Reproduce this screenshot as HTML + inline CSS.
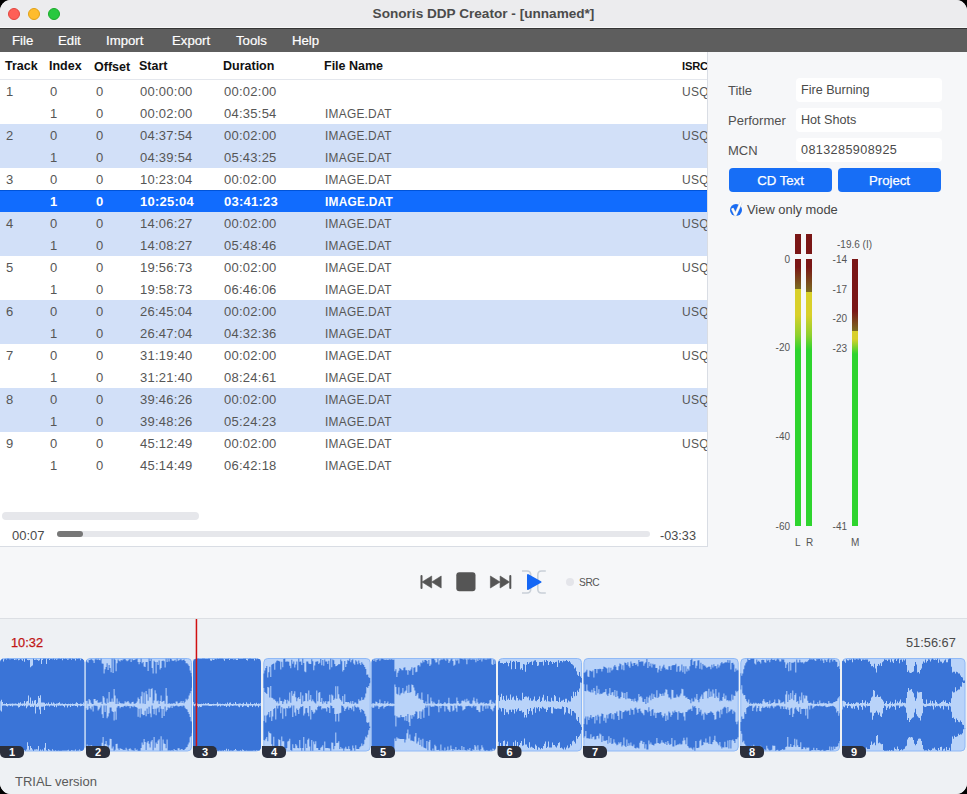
<!DOCTYPE html>
<html><head><meta charset="utf-8">
<style>
*{margin:0;padding:0;box-sizing:border-box}
html,body{width:967px;height:794px;overflow:hidden;background:#000}
body{font-family:"Liberation Sans",sans-serif;position:relative}
.a{position:absolute}
#win{position:absolute;left:0;top:0;width:967px;height:794px;background:#f6f7f9;border-radius:11px;overflow:hidden}
#titlebar{left:0;top:0;width:967px;height:28px;background:#ececee;border-bottom:1px solid #f8f8f8}
.tl{width:12px;height:12px;border-radius:50%;top:8px}
#title{left:0;width:967px;top:6px;text-align:center;font-weight:bold;font-size:13.6px;color:#4b4b4b}
#menubar{left:0;top:28px;width:967px;height:24px;background:#5e5e5e;border-top:1px solid #353535}
.mi{top:4px;font-size:13.2px;color:#fff;-webkit-text-stroke:0.2px #fff}
#table{left:0;top:52px;width:708px;height:495px;background:#fff;border-right:1px solid #d9dde4;border-bottom:1px solid #d9dde4;overflow:hidden}
.hd{font-weight:bold;font-size:12.5px;color:#111;top:7px}
.row{position:absolute;left:0;width:707px;height:22px;font-size:13px;color:#565656}
.row span{position:absolute;top:4px;letter-spacing:0.25px}
.b{background:#d2e0f8}
.sel{background:#116cfe;box-shadow:inset 0 1px 0 #0053d8;color:#fff;font-weight:bold}
.lbl{font-size:13px;color:#505050}
.inp{left:796px;width:146px;height:24px;background:#fff;border-radius:4px;font-size:12.6px;color:#4a4a4a;padding:5px 0 0 5px}
.btn{top:168px;height:24px;background:#176ef6;border-radius:4px;color:#fff;font-size:13.2px;text-align:center;padding-top:5px;-webkit-text-stroke:0.25px #fff}
.ml{font-size:10px;color:#555}
</style></head><body>
<div id="win">
 <div id="titlebar" class="a"></div>
 <div class="a tl" style="left:8px;background:#fe5f57;border:0.5px solid #e2463f"></div>
 <div class="a tl" style="left:28px;background:#febc2e;border:0.5px solid #e1a116"></div>
 <div class="a tl" style="left:48px;background:#28c840;border:0.5px solid #1aab29"></div>
 <div id="title" class="a">Sonoris DDP Creator - [unnamed*]</div>
 <div id="menubar" class="a">
  <span class="a mi" style="left:12px">File</span>
  <span class="a mi" style="left:58px">Edit</span>
  <span class="a mi" style="left:106px">Import</span>
  <span class="a mi" style="left:172px">Export</span>
  <span class="a mi" style="left:236px">Tools</span>
  <span class="a mi" style="left:292px">Help</span>
 </div>
 <div id="table" class="a">
  <span class="a hd" style="left:5px">Track</span>
  <span class="a hd" style="left:49px">Index</span>
  <span class="a hd" style="left:94px;top:8px">Offset</span>
  <span class="a hd" style="left:139px">Start</span>
  <span class="a hd" style="left:223px">Duration</span>
  <span class="a hd" style="left:324px">File Name</span>
  <span class="a hd" style="left:682px;font-size:11.2px;letter-spacing:-0.2px;top:8px">ISRC</span>
  <div class="a" style="left:0;top:27px;width:707px;height:1px;background:#e4e7ed"></div>
  <div class="row" style="top:28px"><span style="left:6px">1</span><span style="left:50px">0</span><span style="left:96px">0</span><span style="left:140px">00:00:00</span><span style="left:224px">00:02:00</span><span style="left:682px;font-size:12px;top:5px">USQ</span></div>
  <div class="row" style="top:50px"><span style="left:50px">1</span><span style="left:96px">0</span><span style="left:140px">00:02:00</span><span style="left:224px">04:35:54</span><span style="left:325px;font-size:11.9px;top:5px">IMAGE.DAT</span></div>
  <div class="row b" style="top:72px"><span style="left:6px">2</span><span style="left:50px">0</span><span style="left:96px">0</span><span style="left:140px">04:37:54</span><span style="left:224px">00:02:00</span><span style="left:325px;font-size:11.9px;top:5px">IMAGE.DAT</span><span style="left:682px;font-size:12px;top:5px">USQ</span></div>
  <div class="row b" style="top:94px"><span style="left:50px">1</span><span style="left:96px">0</span><span style="left:140px">04:39:54</span><span style="left:224px">05:43:25</span><span style="left:325px;font-size:11.9px;top:5px">IMAGE.DAT</span></div>
  <div class="row" style="top:116px"><span style="left:6px">3</span><span style="left:50px">0</span><span style="left:96px">0</span><span style="left:140px">10:23:04</span><span style="left:224px">00:02:00</span><span style="left:325px;font-size:11.9px;top:5px">IMAGE.DAT</span><span style="left:682px;font-size:12px;top:5px">USQ</span></div>
  <div class="row sel" style="top:138px"><span style="left:50px">1</span><span style="left:96px">0</span><span style="left:140px">10:25:04</span><span style="left:224px">03:41:23</span><span style="left:325px;font-size:11.9px;top:5px">IMAGE.DAT</span></div>
  <div class="row b" style="top:160px"><span style="left:6px">4</span><span style="left:50px">0</span><span style="left:96px">0</span><span style="left:140px">14:06:27</span><span style="left:224px">00:02:00</span><span style="left:325px;font-size:11.9px;top:5px">IMAGE.DAT</span><span style="left:682px;font-size:12px;top:5px">USQ</span></div>
  <div class="row b" style="top:182px"><span style="left:50px">1</span><span style="left:96px">0</span><span style="left:140px">14:08:27</span><span style="left:224px">05:48:46</span><span style="left:325px;font-size:11.9px;top:5px">IMAGE.DAT</span></div>
  <div class="row" style="top:204px"><span style="left:6px">5</span><span style="left:50px">0</span><span style="left:96px">0</span><span style="left:140px">19:56:73</span><span style="left:224px">00:02:00</span><span style="left:325px;font-size:11.9px;top:5px">IMAGE.DAT</span><span style="left:682px;font-size:12px;top:5px">USQ</span></div>
  <div class="row" style="top:226px"><span style="left:50px">1</span><span style="left:96px">0</span><span style="left:140px">19:58:73</span><span style="left:224px">06:46:06</span><span style="left:325px;font-size:11.9px;top:5px">IMAGE.DAT</span></div>
  <div class="row b" style="top:248px"><span style="left:6px">6</span><span style="left:50px">0</span><span style="left:96px">0</span><span style="left:140px">26:45:04</span><span style="left:224px">00:02:00</span><span style="left:325px;font-size:11.9px;top:5px">IMAGE.DAT</span><span style="left:682px;font-size:12px;top:5px">USQ</span></div>
  <div class="row b" style="top:270px"><span style="left:50px">1</span><span style="left:96px">0</span><span style="left:140px">26:47:04</span><span style="left:224px">04:32:36</span><span style="left:325px;font-size:11.9px;top:5px">IMAGE.DAT</span></div>
  <div class="row" style="top:292px"><span style="left:6px">7</span><span style="left:50px">0</span><span style="left:96px">0</span><span style="left:140px">31:19:40</span><span style="left:224px">00:02:00</span><span style="left:325px;font-size:11.9px;top:5px">IMAGE.DAT</span><span style="left:682px;font-size:12px;top:5px">USQ</span></div>
  <div class="row" style="top:314px"><span style="left:50px">1</span><span style="left:96px">0</span><span style="left:140px">31:21:40</span><span style="left:224px">08:24:61</span><span style="left:325px;font-size:11.9px;top:5px">IMAGE.DAT</span></div>
  <div class="row b" style="top:336px"><span style="left:6px">8</span><span style="left:50px">0</span><span style="left:96px">0</span><span style="left:140px">39:46:26</span><span style="left:224px">00:02:00</span><span style="left:325px;font-size:11.9px;top:5px">IMAGE.DAT</span><span style="left:682px;font-size:12px;top:5px">USQ</span></div>
  <div class="row b" style="top:358px"><span style="left:50px">1</span><span style="left:96px">0</span><span style="left:140px">39:48:26</span><span style="left:224px">05:24:23</span><span style="left:325px;font-size:11.9px;top:5px">IMAGE.DAT</span></div>
  <div class="row" style="top:380px"><span style="left:6px">9</span><span style="left:50px">0</span><span style="left:96px">0</span><span style="left:140px">45:12:49</span><span style="left:224px">00:02:00</span><span style="left:325px;font-size:11.9px;top:5px">IMAGE.DAT</span><span style="left:682px;font-size:12px;top:5px">USQ</span></div>
  <div class="row" style="top:402px"><span style="left:50px">1</span><span style="left:96px">0</span><span style="left:140px">45:14:49</span><span style="left:224px">06:42:18</span><span style="left:325px;font-size:11.9px;top:5px">IMAGE.DAT</span></div>
 </div>

 <!-- right panel -->
 <span class="a lbl" style="left:728px;top:83px">Title</span>
 <span class="a lbl" style="left:728px;top:113px">Performer</span>
 <span class="a lbl" style="left:728px;top:143px">MCN</span>
 <div class="a inp" style="top:78px">Fire Burning</div>
 <div class="a inp" style="top:108px">Hot Shots</div>
 <div class="a inp" style="top:138px;letter-spacing:0.4px">0813285908925</div>
 <div class="a btn" style="left:729px;width:103px">CD Text</div>
 <div class="a btn" style="left:838px;width:103px">Project</div>
 <div class="a" style="left:730px;top:204px;width:12px;height:12px;border-radius:50%;background:#1a6cf3"></div>
 <svg class="a" style="left:724px;top:196px" width="24" height="24" viewBox="724 196 24 24"><path d="M732.3 208.3 L735.4 214.8 L741.2 202.2" stroke="#d6d6d6" stroke-width="2.8" fill="none" stroke-linejoin="round"/><path d="M732.3 208.3 L735.4 214.8 L741.2 202.2" stroke="#fff" stroke-width="1.7" fill="none" stroke-linejoin="round"/></svg>
 <span class="a" style="left:747px;top:202px;font-size:12.9px;color:#454545">View only mode</span>
 <!-- meters -->
 <div class="a" style="left:795px;top:234px;width:6px;height:20px;background:#7a1616"></div>
 <div class="a" style="left:806px;top:234px;width:6px;height:20px;background:#7a1616"></div>
 <div class="a" style="left:795px;top:259px;width:6px;height:267px;background:linear-gradient(to bottom,#7a1616 0px,#7a1616 8px,#7b6c20 30px,#d9d02a 30.5px,#d9d02a 56px,#8fd02e 76px,#2ed42e 91px,#2ed42e 267px)"></div>
 <div class="a" style="left:806px;top:259px;width:6px;height:267px;background:linear-gradient(to bottom,#7a1616 0px,#7a1616 8px,#7b6c20 33px,#d9d02a 33.5px,#d9d02a 56px,#8fd02e 76px,#2ed42e 91px,#2ed42e 267px)"></div>
 <div class="a" style="left:852px;top:259px;width:6px;height:267px;background:linear-gradient(to bottom,#7a1616 0px,#7a1616 52px,#7b6c20 72px,#d9d02a 72.5px,#d9d02a 80px,#2ed42e 95px,#2ed42e 267px)"></div>
 <span class="a ml" style="right:177px;top:254px">0</span>
 <span class="a ml" style="right:177px;top:342px">-20</span>
 <span class="a ml" style="right:177px;top:431px">-40</span>
 <span class="a ml" style="right:177px;top:521px">-60</span>
 <span class="a ml" style="right:120px;top:254px">-14</span>
 <span class="a ml" style="right:120px;top:284px">-17</span>
 <span class="a ml" style="right:120px;top:313px">-20</span>
 <span class="a ml" style="right:120px;top:343px">-23</span>
 <span class="a ml" style="right:120px;top:521px">-41</span>
 <span class="a ml" style="left:837px;top:239px">-19.6 (I)</span>
 <span class="a ml" style="left:795px;top:537px">L</span>
 <span class="a ml" style="left:806px;top:537px">R</span>
 <span class="a ml" style="left:851px;top:537px">M</span>
 <!-- progress -->
 <div class="a" style="left:2px;top:512px;width:197px;height:8px;border-radius:4px;background:#e6e7eb"></div>
 <span class="a" style="left:12px;top:528px;font-size:13px;color:#4a4a4a">00:07</span>
 <div class="a" style="left:57px;top:531px;width:593px;height:6px;border-radius:3px;background:#e6e7eb"></div>
 <div class="a" style="left:57px;top:531px;width:26px;height:6px;border-radius:3px;background:#777"></div>
 <span class="a" style="left:660px;top:529px;font-size:12.7px;color:#4a4a4a">-03:33</span>
 <!-- transport -->
 <svg class="a" style="left:0;top:560px" width="967" height="40" viewBox="0 560 967 40">
  <rect x="420.5" y="575" width="2" height="14" rx="1" fill="#555"/>
  <path d="M422 582 L431.7 576 L431.7 588 Z M431.7 582 L441.2 576 L441.2 588 Z" fill="#555" stroke="#555" stroke-width="0.6" stroke-linejoin="round"/>
  <rect x="456.3" y="572.3" width="19.2" height="19" rx="3" fill="#555"/>
  <path d="M490.4 576 L500.1 582 L490.4 588 Z M500.1 576 L509.5 582 L500.1 588 Z" fill="#555" stroke="#555" stroke-width="0.6" stroke-linejoin="round"/>
  <rect x="509.3" y="575" width="2" height="14" rx="1" fill="#555"/>
  <path d="M522 571 L527 571 Q530.7 571 530.7 575 L530.7 589 Q530.7 593 527 593 L522 593" fill="none" stroke="#c9d0d8" stroke-width="1.6"/>
  <path d="M545.8 571 L541.5 571 Q537.8 571 537.8 575 L537.8 589 Q537.8 593 541.5 593 L545.8 593" fill="none" stroke="#c9d0d8" stroke-width="1.6"/>
  <path d="M528 575 L540.5 582 L528 589 Z" fill="#1567f5" stroke="#1567f5" stroke-width="2" stroke-linejoin="round"/>
  <circle cx="570" cy="582" r="4" fill="#e4e5ea"/>
 </svg>
 <span class="a" style="left:579px;top:577px;font-size:10.2px;letter-spacing:-0.4px;color:#555">SRC</span>
 <!-- timeline -->
 <div class="a" style="left:0;top:618px;width:967px;height:176px;background:#eef1f4;border-top:1px solid #dcdfe4"></div>
 <span class="a" style="left:11px;top:635px;font-size:12.8px;color:#c01515;-webkit-text-stroke:0.25px #c01515">10:32</span>
 <span class="a" style="left:906px;top:635px;font-size:12.8px;color:#4a4a4a">51:56:67</span>
 <svg class="a" style="left:0;top:618px" width="967" height="147" viewBox="0 618 967 147"><rect x="0.5" y="658.5" width="83.5" height="92.5" rx="4" fill="#b9d3f9" stroke="#8fb9f6" stroke-width="1"/><clipPath id="c0"><rect x="0.0" y="658.0" width="84.5" height="93.5" rx="4.5"/></clipPath><path clip-path="url(#c0)" d="M0 660.3L1 660.3L1 659.4L2 659.4L2 658.8L3 658.8L3 661.5L4 661.5L4 659.2L5 659.2L5 659.0L6 659.0L6 659.4L7 659.4L7 658.8L8 658.8L8 658.8L9 658.8L9 659.2L10 659.2L10 659.3L11 659.3L11 659.0L12 659.0L12 659.1L13 659.1L13 659.0L14 659.0L14 660.0L15 660.0L15 659.5L16 659.5L16 659.4L17 659.4L17 658.9L18 658.9L18 660.2L19 660.2L19 659.7L20 659.7L20 659.1L21 659.1L21 659.6L22 659.6L22 660.7L23 660.7L23 658.9L24 658.9L24 661.7L25 661.7L25 658.8L26 658.8L26 658.8L27 658.8L27 660.1L28 660.1L28 660.2L29 660.2L29 660.0L30 660.0L30 667.3L31 667.3L31 666.2L32 666.2L32 665.4L33 665.4L33 658.8L34 658.8L34 659.9L35 659.9L35 659.7L36 659.7L36 659.5L37 659.5L37 660.1L38 660.1L38 660.8L39 660.8L39 660.2L40 660.2L40 658.8L41 658.8L41 664.1L42 664.1L42 660.1L43 660.1L43 658.8L44 658.8L44 658.8L45 658.8L45 658.8L46 658.8L46 664.1L47 664.1L47 659.0L48 659.0L48 658.8L49 658.8L49 660.0L50 660.0L50 659.0L51 659.0L51 659.0L52 659.0L52 659.2L53 659.2L53 658.8L54 658.8L54 659.7L55 659.7L55 659.0L56 659.0L56 659.8L57 659.8L57 659.2L58 659.2L58 658.8L59 658.8L59 658.8L60 658.8L60 659.0L61 659.0L61 658.8L62 658.8L62 660.3L63 660.3L63 658.8L64 658.8L64 659.1L65 659.1L65 658.8L66 658.8L66 658.9L67 658.9L67 659.8L68 659.8L68 659.5L69 659.5L69 658.8L70 658.8L70 658.8L71 658.8L71 659.7L72 659.7L72 658.8L73 658.8L73 659.0L74 659.0L74 659.1L75 659.1L75 660.6L76 660.6L76 658.8L77 658.8L77 658.9L78 658.9L78 658.8L79 658.8L79 658.8L80 658.8L80 660.3L81 660.3L81 658.8L82 658.8L82 659.0L83 659.0L83 659.9L84 659.9L84 658.8L84.5 658.8L84.5 703.7L84 703.7L84 702.5L83 702.5L83 703.9L82 703.9L82 703.7L81 703.7L81 703.5L80 703.5L80 703.9L79 703.9L79 704.0L78 704.0L78 703.1L77 703.1L77 702.2L76 702.2L76 703.6L75 703.6L75 704.0L74 704.0L74 703.9L73 703.9L73 703.6L72 703.6L72 704.0L71 704.0L71 703.7L70 703.7L70 704.0L69 704.0L69 703.7L68 703.7L68 703.9L67 703.9L67 704.0L66 704.0L66 703.6L65 703.6L65 704.0L64 704.0L64 703.9L63 703.9L63 703.6L62 703.6L62 703.7L61 703.7L61 703.7L60 703.7L60 702.3L59 702.3L59 703.1L58 703.1L58 703.5L57 703.5L57 703.6L56 703.6L56 704.0L55 704.0L55 703.6L54 703.6L54 702.6L53 702.6L53 703.7L52 703.7L52 702.6L51 702.6L51 704.0L50 704.0L50 704.0L49 704.0L49 702.5L48 702.5L48 703.7L47 703.7L47 703.3L46 703.3L46 704.0L45 704.0L45 702.7L44 702.7L44 702.6L43 702.6L43 702.6L42 702.6L42 702.6L41 702.6L41 695.2L40 695.2L40 697.9L39 697.9L39 695.9L38 695.9L38 702.7L37 702.7L37 704.0L36 704.0L36 699.9L35 699.9L35 700.5L34 700.5L34 703.6L33 703.6L33 700.8L32 700.8L32 703.7L31 703.7L31 697.4L30 697.4L30 703.2L29 703.2L29 695.5L28 695.5L28 701.0L27 701.0L27 701.5L26 701.5L26 703.5L25 703.5L25 701.0L24 701.0L24 703.6L23 703.6L23 703.4L22 703.4L22 703.7L21 703.7L21 702.2L20 702.2L20 703.3L19 703.3L19 702.7L18 702.7L18 704.0L17 704.0L17 703.7L16 703.7L16 703.6L15 703.6L15 703.8L14 703.8L14 703.8L13 703.8L13 703.4L12 703.4L12 703.8L11 703.8L11 703.7L10 703.7L10 703.7L9 703.7L9 704.0L8 704.0L8 704.0L7 704.0L7 703.0L6 703.0L6 704.0L5 704.0L5 703.7L4 703.7L4 703.9L3 703.9L3 702.0L2 702.0L2 699.8L1 699.8L1 701.3L0 701.3ZM0 710.5L1 710.5L1 711.4L2 711.4L2 705.8L3 705.8L3 705.5L4 705.5L4 705.5L5 705.5L5 705.6L6 705.6L6 705.9L7 705.9L7 706.4L8 706.4L8 705.5L9 705.5L9 705.6L10 705.6L10 706.1L11 706.1L11 705.5L12 705.5L12 706.6L13 706.6L13 705.5L14 705.5L14 705.5L15 705.5L15 705.5L16 705.5L16 705.6L17 705.6L17 705.7L18 705.7L18 707.5L19 707.5L19 707.0L20 707.0L20 705.7L21 705.7L21 705.5L22 705.5L22 705.9L23 705.9L23 705.5L24 705.5L24 706.3L25 706.3L25 705.5L26 705.5L26 708.3L27 708.3L27 706.6L28 706.6L28 705.5L29 705.5L29 705.5L30 705.5L30 706.9L31 706.9L31 706.7L32 706.7L32 706.5L33 706.5L33 706.9L34 706.9L34 705.5L35 705.5L35 713.6L36 713.6L36 706.7L37 706.7L37 706.9L38 706.9L38 706.6L39 706.6L39 709.6L40 709.6L40 713.9L41 713.9L41 706.8L42 706.8L42 706.8L43 706.8L43 706.6L44 706.6L44 709.9L45 709.9L45 706.1L46 706.1L46 705.5L47 705.5L47 705.8L48 705.8L48 705.5L49 705.5L49 706.5L50 706.5L50 705.5L51 705.5L51 705.5L52 705.5L52 705.8L53 705.8L53 705.8L54 705.8L54 707.0L55 707.0L55 705.6L56 705.6L56 707.3L57 707.3L57 705.6L58 705.6L58 705.7L59 705.7L59 705.5L60 705.5L60 705.8L61 705.8L61 705.5L62 705.5L62 705.5L63 705.5L63 705.9L64 705.9L64 707.3L65 707.3L65 705.5L66 705.5L66 705.5L67 705.5L67 707.5L68 707.5L68 705.8L69 705.8L69 705.5L70 705.5L70 706.9L71 706.9L71 705.5L72 705.5L72 705.9L73 705.9L73 705.8L74 705.8L74 705.5L75 705.5L75 705.9L76 705.9L76 705.9L77 705.9L77 707.3L78 707.3L78 705.5L79 705.5L79 705.6L80 705.6L80 706.2L81 706.2L81 706.0L82 706.0L82 705.5L83 705.5L83 705.9L84 705.9L84 705.7L84.5 705.7L84.5 749.9L84 749.9L84 750.5L83 750.5L83 750.5L82 750.5L82 750.7L81 750.7L81 750.4L80 750.4L80 749.4L79 749.4L79 750.6L78 750.6L78 750.4L77 750.4L77 750.7L76 750.7L76 749.6L75 749.6L75 750.6L74 750.6L74 750.6L73 750.6L73 750.3L72 750.3L72 750.0L71 750.0L71 750.7L70 750.7L70 750.7L69 750.7L69 749.8L68 749.8L68 750.3L67 750.3L67 750.6L66 750.6L66 750.5L65 750.5L65 750.5L64 750.5L64 750.6L63 750.6L63 750.5L62 750.5L62 750.7L61 750.7L61 750.7L60 750.7L60 750.7L59 750.7L59 750.4L58 750.4L58 750.7L57 750.7L57 750.7L56 750.7L56 750.3L55 750.3L55 750.7L54 750.7L54 750.4L53 750.4L53 749.3L52 749.3L52 750.7L51 750.7L51 750.5L50 750.5L50 749.7L49 749.7L49 748.9L48 748.9L48 750.7L47 750.7L47 750.2L46 750.2L46 742.9L45 742.9L45 747.7L44 747.7L44 750.7L43 750.7L43 749.4L42 749.4L42 750.6L41 750.6L41 749.6L40 749.6L40 750.7L39 750.7L39 745.9L38 745.9L38 749.5L37 749.5L37 749.3L36 749.3L36 749.4L35 749.4L35 749.4L34 749.4L34 750.7L33 750.7L33 749.4L32 749.4L32 747.9L31 747.9L31 746.0L30 746.0L30 749.7L29 749.7L29 745.9L28 745.9L28 742.3L27 742.3L27 749.6L26 749.6L26 750.7L25 750.7L25 750.1L24 750.1L24 750.7L23 750.7L23 750.7L22 750.7L22 750.2L21 750.2L21 750.6L20 750.6L20 750.4L19 750.4L19 750.6L18 750.6L18 748.9L17 748.9L17 750.4L16 750.4L16 750.5L15 750.5L15 749.5L14 749.5L14 750.7L13 750.7L13 750.2L12 750.2L12 749.3L11 749.3L11 750.6L10 750.6L10 750.7L9 750.7L9 749.5L8 749.5L8 750.3L7 750.3L7 749.7L6 749.7L6 750.7L5 750.7L5 750.7L4 750.7L4 750.5L3 750.5L3 750.7L2 750.7L2 749.0L1 749.0L1 747.8L0 747.8Z" fill="#3a74d7"/><rect x="86.1" y="658.5" width="105.4" height="92.5" rx="4" fill="#b9d3f9" stroke="#8fb9f6" stroke-width="1"/><clipPath id="c1"><rect x="85.6" y="658.0" width="106.4" height="93.5" rx="4.5"/></clipPath><path clip-path="url(#c1)" d="M85.6 660.2L86.6 660.2L86.6 661.8L87.6 661.8L87.6 662.8L88.6 662.8L88.6 660.0L89.6 660.0L89.6 659.9L90.6 659.9L90.6 658.9L91.6 658.9L91.6 659.8L92.6 659.8L92.6 660.6L93.6 660.6L93.6 663.1L94.6 663.1L94.6 659.4L95.6 659.4L95.6 658.8L96.6 658.8L96.6 660.1L97.6 660.1L97.6 658.8L98.6 658.8L98.6 660.1L99.6 660.1L99.6 660.3L100.6 660.3L100.6 658.8L101.6 658.8L101.6 663.6L102.6 663.6L102.6 663.8L103.6 663.8L103.6 673.4L104.6 673.4L104.6 669.3L105.6 669.3L105.6 667.0L106.6 667.0L106.6 663.2L107.6 663.2L107.6 670.1L108.6 670.1L108.6 665.0L109.6 665.0L109.6 668.1L110.6 668.1L110.6 672.3L111.6 672.3L111.6 658.8L112.6 658.8L112.6 673.1L113.6 673.1L113.6 658.8L114.6 658.8L114.6 659.8L115.6 659.8L115.6 671.2L116.6 671.2L116.6 663.3L117.6 663.3L117.6 659.5L118.6 659.5L118.6 660.7L119.6 660.7L119.6 661.4L120.6 661.4L120.6 660.1L121.6 660.1L121.6 660.6L122.6 660.6L122.6 659.4L123.6 659.4L123.6 659.3L124.6 659.3L124.6 658.9L125.6 658.9L125.6 660.2L126.6 660.2L126.6 661.2L127.6 661.2L127.6 660.4L128.6 660.4L128.6 659.6L129.6 659.6L129.6 659.1L130.6 659.1L130.6 661.9L131.6 661.9L131.6 659.1L132.6 659.1L132.6 660.3L133.6 660.3L133.6 660.0L134.6 660.0L134.6 659.5L135.6 659.5L135.6 659.3L136.6 659.3L136.6 658.8L137.6 658.8L137.6 662.0L138.6 662.0L138.6 664.3L139.6 664.3L139.6 662.0L140.6 662.0L140.6 658.8L141.6 658.8L141.6 663.3L142.6 663.3L142.6 662.1L143.6 662.1L143.6 666.5L144.6 666.5L144.6 667.1L145.6 667.1L145.6 662.0L146.6 662.0L146.6 662.0L147.6 662.0L147.6 671.1L148.6 671.1L148.6 658.8L149.6 658.8L149.6 661.0L150.6 661.0L150.6 659.0L151.6 659.0L151.6 668.1L152.6 668.1L152.6 673.5L153.6 673.5L153.6 660.7L154.6 660.7L154.6 662.0L155.6 662.0L155.6 673.4L156.6 673.4L156.6 661.9L157.6 661.9L157.6 664.9L158.6 664.9L158.6 660.6L159.6 660.6L159.6 669.6L160.6 669.6L160.6 668.1L161.6 668.1L161.6 661.1L162.6 661.1L162.6 660.5L163.6 660.5L163.6 661.2L164.6 661.2L164.6 667.5L165.6 667.5L165.6 658.8L166.6 658.8L166.6 661.9L167.6 661.9L167.6 658.8L168.6 658.8L168.6 661.6L169.6 661.6L169.6 658.8L170.6 658.8L170.6 659.1L171.6 659.1L171.6 660.5L172.6 660.5L172.6 661.1L173.6 661.1L173.6 660.4L174.6 660.4L174.6 659.7L175.6 659.7L175.6 661.4L176.6 661.4L176.6 658.8L177.6 658.8L177.6 660.7L178.6 660.7L178.6 660.2L179.6 660.2L179.6 659.6L180.6 659.6L180.6 659.3L181.6 659.3L181.6 660.6L182.6 660.6L182.6 660.0L183.6 660.0L183.6 659.5L184.6 659.5L184.6 661.1L185.6 661.1L185.6 663.3L186.6 663.3L186.6 663.3L187.6 663.3L187.6 664.4L188.6 664.4L188.6 666.1L189.6 666.1L189.6 670.5L190.6 670.5L190.6 673.1L191.6 673.1L191.6 676.5L192 676.5L192 687.7L191.6 687.7L191.6 691.1L190.6 691.1L190.6 693.3L189.6 693.3L189.6 695.5L188.6 695.5L188.6 698.8L187.6 698.8L187.6 700.2L186.6 700.2L186.6 698.8L185.6 698.8L185.6 701.8L184.6 701.8L184.6 703.2L183.6 703.2L183.6 701.1L182.6 701.1L182.6 703.1L181.6 703.1L181.6 701.1L180.6 701.1L180.6 702.4L179.6 702.4L179.6 703.1L178.6 703.1L178.6 703.4L177.6 703.4L177.6 701.4L176.6 701.4L176.6 701.5L175.6 701.5L175.6 704.0L174.6 704.0L174.6 703.1L173.6 703.1L173.6 703.6L172.6 703.6L172.6 703.8L171.6 703.8L171.6 703.5L170.6 703.5L170.6 703.9L169.6 703.9L169.6 703.1L168.6 703.1L168.6 703.9L167.6 703.9L167.6 695.8L166.6 695.8L166.6 688.0L165.6 688.0L165.6 703.7L164.6 703.7L164.6 700.7L163.6 700.7L163.6 701.1L162.6 701.1L162.6 702.0L161.6 702.0L161.6 695.6L160.6 695.6L160.6 700.9L159.6 700.9L159.6 703.9L158.6 703.9L158.6 700.6L157.6 700.6L157.6 701.3L156.6 701.3L156.6 693.4L155.6 693.4L155.6 690.2L154.6 690.2L154.6 700.6L153.6 700.6L153.6 703.2L152.6 703.2L152.6 688.3L151.6 688.3L151.6 688.9L150.6 688.9L150.6 697.2L149.6 697.2L149.6 688.7L148.6 688.7L148.6 700.7L147.6 700.7L147.6 694.3L146.6 694.3L146.6 691.0L145.6 691.0L145.6 704.0L144.6 704.0L144.6 692.4L143.6 692.4L143.6 703.4L142.6 703.4L142.6 691.8L141.6 691.8L141.6 696.2L140.6 696.2L140.6 703.5L139.6 703.5L139.6 698.9L138.6 698.9L138.6 697.4L137.6 697.4L137.6 701.6L136.6 701.6L136.6 703.0L135.6 703.0L135.6 703.7L134.6 703.7L134.6 703.7L133.6 703.7L133.6 701.7L132.6 701.7L132.6 702.0L131.6 702.0L131.6 703.6L130.6 703.6L130.6 703.8L129.6 703.8L129.6 702.4L128.6 702.4L128.6 700.9L127.6 700.9L127.6 701.7L126.6 701.7L126.6 702.6L125.6 702.6L125.6 701.3L124.6 701.3L124.6 703.4L123.6 703.4L123.6 703.8L122.6 703.8L122.6 703.2L121.6 703.2L121.6 703.5L120.6 703.5L120.6 703.1L119.6 703.1L119.6 701.4L118.6 701.4L118.6 704.0L117.6 704.0L117.6 698.5L116.6 698.5L116.6 704.0L115.6 704.0L115.6 695.6L114.6 695.6L114.6 689.1L113.6 689.1L113.6 701.8L112.6 701.8L112.6 698.4L111.6 698.4L111.6 701.8L110.6 701.8L110.6 701.8L109.6 701.8L109.6 692.1L108.6 692.1L108.6 702.8L107.6 702.8L107.6 698.5L106.6 698.5L106.6 704.0L105.6 704.0L105.6 702.7L104.6 702.7L104.6 697.5L103.6 697.5L103.6 696.1L102.6 696.1L102.6 704.0L101.6 704.0L101.6 701.8L100.6 701.8L100.6 702.6L99.6 702.6L99.6 702.6L98.6 702.6L98.6 702.8L97.6 702.8L97.6 700.1L96.6 700.1L96.6 701.0L95.6 701.0L95.6 699.0L94.6 699.0L94.6 699.1L93.6 699.1L93.6 704.0L92.6 704.0L92.6 704.0L91.6 704.0L91.6 702.7L90.6 702.7L90.6 700.2L89.6 700.2L89.6 699.0L88.6 699.0L88.6 703.8L87.6 703.8L87.6 700.8L86.6 700.8L86.6 700.9L85.6 700.9ZM85.6 708.3L86.6 708.3L86.6 709.9L87.6 709.9L87.6 709.4L88.6 709.4L88.6 706.1L89.6 706.1L89.6 708.2L90.6 708.2L90.6 709.5L91.6 709.5L91.6 706.6L92.6 706.6L92.6 711.4L93.6 711.4L93.6 705.5L94.6 705.5L94.6 705.7L95.6 705.7L95.6 705.7L96.6 705.7L96.6 706.3L97.6 706.3L97.6 710.6L98.6 710.6L98.6 709.2L99.6 709.2L99.6 707.4L100.6 707.4L100.6 705.5L101.6 705.5L101.6 714.2L102.6 714.2L102.6 717.9L103.6 717.9L103.6 705.5L104.6 705.5L104.6 712.1L105.6 712.1L105.6 705.5L106.6 705.5L106.6 718.2L107.6 718.2L107.6 716.6L108.6 716.6L108.6 713.2L109.6 713.2L109.6 707.6L110.6 707.6L110.6 707.6L111.6 707.6L111.6 711.3L112.6 711.3L112.6 711.9L113.6 711.9L113.6 720.5L114.6 720.5L114.6 711.4L115.6 711.4L115.6 719.7L116.6 719.7L116.6 707.6L117.6 707.6L117.6 706.0L118.6 706.0L118.6 706.3L119.6 706.3L119.6 708.2L120.6 708.2L120.6 707.0L121.6 707.0L121.6 706.7L122.6 706.7L122.6 707.3L123.6 707.3L123.6 706.1L124.6 706.1L124.6 705.8L125.6 705.8L125.6 706.8L126.6 706.8L126.6 705.8L127.6 705.8L127.6 706.2L128.6 706.2L128.6 706.1L129.6 706.1L129.6 708.3L130.6 708.3L130.6 706.0L131.6 706.0L131.6 706.6L132.6 706.6L132.6 707.2L133.6 707.2L133.6 705.8L134.6 705.8L134.6 706.7L135.6 706.7L135.6 707.1L136.6 707.1L136.6 707.7L137.6 707.7L137.6 716.8L138.6 716.8L138.6 708.7L139.6 708.7L139.6 717.5L140.6 717.5L140.6 708.6L141.6 708.6L141.6 714.0L142.6 714.0L142.6 715.2L143.6 715.2L143.6 714.9L144.6 714.9L144.6 710.8L145.6 710.8L145.6 716.2L146.6 716.2L146.6 708.5L147.6 708.5L147.6 714.1L148.6 714.1L148.6 706.7L149.6 706.7L149.6 713.5L150.6 713.5L150.6 717.3L151.6 717.3L151.6 705.5L152.6 705.5L152.6 708.9L153.6 708.9L153.6 714.3L154.6 714.3L154.6 708.7L155.6 708.7L155.6 715.3L156.6 715.3L156.6 708.6L157.6 708.6L157.6 707.6L158.6 707.6L158.6 712.3L159.6 712.3L159.6 706.1L160.6 706.1L160.6 708.7L161.6 708.7L161.6 717.9L162.6 717.9L162.6 708.9L163.6 708.9L163.6 716.0L164.6 716.0L164.6 706.4L165.6 706.4L165.6 711.6L166.6 711.6L166.6 710.1L167.6 710.1L167.6 707.3L168.6 707.3L168.6 708.3L169.6 708.3L169.6 707.4L170.6 707.4L170.6 705.8L171.6 705.8L171.6 708.0L172.6 708.0L172.6 705.7L173.6 705.7L173.6 706.4L174.6 706.4L174.6 705.9L175.6 705.9L175.6 705.5L176.6 705.5L176.6 705.7L177.6 705.7L177.6 706.4L178.6 706.4L178.6 706.4L179.6 706.4L179.6 706.1L180.6 706.1L180.6 705.7L181.6 705.7L181.6 706.4L182.6 706.4L182.6 705.5L183.6 705.5L183.6 705.7L184.6 705.7L184.6 707.8L185.6 707.8L185.6 708.9L186.6 708.9L186.6 709.4L187.6 709.4L187.6 712.1L188.6 712.1L188.6 714.0L189.6 714.0L189.6 717.0L190.6 717.0L190.6 721.3L191.6 721.3L191.6 721.7L192 721.7L192 733.2L191.6 733.2L191.6 736.0L190.6 736.0L190.6 737.3L189.6 737.3L189.6 742.6L188.6 742.6L188.6 744.6L187.6 744.6L187.6 746.9L186.6 746.9L186.6 747.5L185.6 747.5L185.6 748.9L184.6 748.9L184.6 750.0L183.6 750.0L183.6 750.0L182.6 750.0L182.6 749.1L181.6 749.1L181.6 749.3L180.6 749.3L180.6 749.9L179.6 749.9L179.6 748.3L178.6 748.3L178.6 748.3L177.6 748.3L177.6 750.5L176.6 750.5L176.6 750.1L175.6 750.1L175.6 749.9L174.6 749.9L174.6 749.1L173.6 749.1L173.6 750.7L172.6 750.7L172.6 749.9L171.6 749.9L171.6 750.5L170.6 750.5L170.6 750.5L169.6 750.5L169.6 750.2L168.6 750.2L168.6 750.6L167.6 750.6L167.6 739.5L166.6 739.5L166.6 748.2L165.6 748.2L165.6 743.9L164.6 743.9L164.6 743.5L163.6 743.5L163.6 739.5L162.6 739.5L162.6 750.4L161.6 750.4L161.6 736.2L160.6 736.2L160.6 750.7L159.6 750.7L159.6 739.2L158.6 739.2L158.6 740.5L157.6 740.5L157.6 744.1L156.6 744.1L156.6 742.6L155.6 742.6L155.6 747.7L154.6 747.7L154.6 736.9L153.6 736.9L153.6 750.2L152.6 750.2L152.6 740.1L151.6 740.1L151.6 741.4L150.6 741.4L150.6 747.5L149.6 747.5L149.6 743.8L148.6 743.8L148.6 741.1L147.6 741.1L147.6 742.6L146.6 742.6L146.6 749.9L145.6 749.9L145.6 741.9L144.6 741.9L144.6 739.0L143.6 739.0L143.6 744.8L142.6 744.8L142.6 742.4L141.6 742.4L141.6 748.1L140.6 748.1L140.6 750.7L139.6 750.7L139.6 750.7L138.6 750.7L138.6 750.7L137.6 750.7L137.6 749.5L136.6 749.5L136.6 750.1L135.6 750.1L135.6 748.3L134.6 748.3L134.6 750.7L133.6 750.7L133.6 750.3L132.6 750.3L132.6 750.2L131.6 750.2L131.6 749.5L130.6 749.5L130.6 748.2L129.6 748.2L129.6 749.1L128.6 749.1L128.6 750.7L127.6 750.7L127.6 749.6L126.6 749.6L126.6 747.8L125.6 747.8L125.6 749.9L124.6 749.9L124.6 749.8L123.6 749.8L123.6 749.9L122.6 749.9L122.6 748.9L121.6 748.9L121.6 748.7L120.6 748.7L120.6 748.2L119.6 748.2L119.6 750.0L118.6 750.0L118.6 748.4L117.6 748.4L117.6 743.7L116.6 743.7L116.6 743.9L115.6 743.9L115.6 749.7L114.6 749.7L114.6 750.7L113.6 750.7L113.6 746.6L112.6 746.6L112.6 748.6L111.6 748.6L111.6 739.0L110.6 739.0L110.6 738.8L109.6 738.8L109.6 745.2L108.6 745.2L108.6 748.4L107.6 748.4L107.6 744.8L106.6 744.8L106.6 740.9L105.6 740.9L105.6 744.1L104.6 744.1L104.6 749.7L103.6 749.7L103.6 736.9L102.6 736.9L102.6 742.7L101.6 742.7L101.6 745.9L100.6 745.9L100.6 750.7L99.6 750.7L99.6 746.6L98.6 746.6L98.6 750.7L97.6 750.7L97.6 750.1L96.6 750.1L96.6 749.6L95.6 749.6L95.6 750.7L94.6 750.7L94.6 746.3L93.6 746.3L93.6 748.5L92.6 748.5L92.6 745.8L91.6 745.8L91.6 745.0L90.6 745.0L90.6 750.1L89.6 750.1L89.6 745.5L88.6 745.5L88.6 749.8L87.6 749.8L87.6 744.6L86.6 744.6L86.6 749.4L85.6 749.4Z" fill="#3a74d7"/><rect x="193.5" y="658.5" width="67.0" height="92.5" rx="4" fill="#b9d3f9" stroke="#8fb9f6" stroke-width="1"/><clipPath id="c2"><rect x="193.0" y="658.0" width="68.0" height="93.5" rx="4.5"/></clipPath><path clip-path="url(#c2)" d="M193 659.0L194 659.0L194 659.2L195 659.2L195 658.9L196 658.9L196 659.1L197 659.1L197 658.8L198 658.8L198 658.8L199 658.8L199 659.1L200 659.1L200 659.1L201 659.1L201 659.0L202 659.0L202 658.8L203 658.8L203 658.8L204 658.8L204 658.8L205 658.8L205 658.9L206 658.9L206 658.9L207 658.9L207 658.9L208 658.9L208 658.8L209 658.8L209 658.8L210 658.8L210 660.5L211 660.5L211 660.7L212 660.7L212 659.6L213 659.6L213 660.1L214 660.1L214 659.6L215 659.6L215 659.0L216 659.0L216 659.2L217 659.2L217 658.8L218 658.8L218 659.0L219 659.0L219 658.8L220 658.8L220 658.8L221 658.8L221 658.8L222 658.8L222 658.8L223 658.8L223 659.2L224 659.2L224 660.7L225 660.7L225 659.1L226 659.1L226 659.0L227 659.0L227 659.1L228 659.1L228 658.8L229 658.8L229 660.1L230 660.1L230 659.0L231 659.0L231 659.1L232 659.1L232 658.9L233 658.9L233 659.5L234 659.5L234 659.3L235 659.3L235 659.2L236 659.2L236 660.0L237 660.0L237 660.1L238 660.1L238 658.8L239 658.8L239 659.1L240 659.1L240 659.0L241 659.0L241 659.0L242 659.0L242 659.1L243 659.1L243 658.8L244 658.8L244 658.8L245 658.8L245 658.8L246 658.8L246 659.9L247 659.9L247 660.5L248 660.5L248 659.0L249 659.0L249 658.8L250 658.8L250 658.8L251 658.8L251 658.9L252 658.9L252 658.9L253 658.9L253 659.1L254 659.1L254 660.5L255 660.5L255 658.8L256 658.8L256 659.2L257 659.2L257 658.8L258 658.8L258 659.0L259 659.0L259 659.0L260 659.0L260 659.2L261 659.2L261 703.0L260 703.0L260 703.7L259 703.7L259 703.6L258 703.6L258 704.0L257 704.0L257 702.7L256 702.7L256 703.8L255 703.8L255 703.2L254 703.2L254 704.0L253 704.0L253 704.0L252 704.0L252 704.0L251 704.0L251 702.6L250 702.6L250 704.0L249 704.0L249 703.7L248 703.7L248 703.8L247 703.8L247 702.3L246 702.3L246 704.0L245 704.0L245 704.0L244 704.0L244 702.7L243 702.7L243 703.8L242 703.8L242 704.0L241 704.0L241 703.6L240 703.6L240 703.6L239 703.6L239 703.8L238 703.8L238 704.0L237 704.0L237 703.7L236 703.7L236 702.0L235 702.0L235 704.0L234 704.0L234 703.6L233 703.6L233 704.0L232 704.0L232 704.0L231 704.0L231 702.4L230 702.4L230 702.8L229 702.8L229 703.9L228 703.9L228 702.4L227 702.4L227 703.9L226 703.9L226 703.6L225 703.6L225 704.0L224 704.0L224 704.0L223 704.0L223 703.8L222 703.8L222 703.9L221 703.9L221 703.8L220 703.8L220 703.7L219 703.7L219 703.8L218 703.8L218 702.3L217 702.3L217 703.7L216 703.7L216 703.9L215 703.9L215 703.9L214 703.9L214 703.8L213 703.8L213 703.9L212 703.9L212 704.0L211 704.0L211 704.0L210 704.0L210 704.0L209 704.0L209 702.9L208 702.9L208 703.5L207 703.5L207 703.7L206 703.7L206 703.2L205 703.2L205 704.0L204 704.0L204 703.6L203 703.6L203 704.0L202 704.0L202 703.8L201 703.8L201 703.9L200 703.9L200 704.0L199 704.0L199 704.0L198 704.0L198 703.4L197 703.4L197 704.0L196 704.0L196 703.5L195 703.5L195 704.0L194 704.0L194 702.1L193 702.1ZM193 705.5L194 705.5L194 706.3L195 706.3L195 705.6L196 705.6L196 705.8L197 705.8L197 705.9L198 705.9L198 707.2L199 707.2L199 706.3L200 706.3L200 707.1L201 707.1L201 706.7L202 706.7L202 705.5L203 705.5L203 705.5L204 705.5L204 705.5L205 705.5L205 705.6L206 705.6L206 705.5L207 705.5L207 705.5L208 705.5L208 705.8L209 705.8L209 705.9L210 705.9L210 705.9L211 705.9L211 706.1L212 706.1L212 705.5L213 705.5L213 705.8L214 705.8L214 705.5L215 705.5L215 705.5L216 705.5L216 705.5L217 705.5L217 706.6L218 706.6L218 705.9L219 705.9L219 705.5L220 705.5L220 706.4L221 706.4L221 705.5L222 705.5L222 705.5L223 705.5L223 705.5L224 705.5L224 705.9L225 705.9L225 705.7L226 705.7L226 706.9L227 706.9L227 705.7L228 705.7L228 705.8L229 705.8L229 706.8L230 706.8L230 705.6L231 705.6L231 705.5L232 705.5L232 705.9L233 705.9L233 705.7L234 705.7L234 705.5L235 705.5L235 705.6L236 705.6L236 705.8L237 705.8L237 705.5L238 705.5L238 706.4L239 706.4L239 707.3L240 707.3L240 705.5L241 705.5L241 705.5L242 705.5L242 707.0L243 707.0L243 706.3L244 706.3L244 705.5L245 705.5L245 705.7L246 705.7L246 705.7L247 705.7L247 707.0L248 707.0L248 707.2L249 707.2L249 705.5L250 705.5L250 705.7L251 705.7L251 705.6L252 705.6L252 706.9L253 706.9L253 705.5L254 705.5L254 705.6L255 705.6L255 706.6L256 706.6L256 705.8L257 705.8L257 705.7L258 705.7L258 707.2L259 707.2L259 705.8L260 705.8L260 706.1L261 706.1L261 749.7L260 749.7L260 750.7L259 750.7L259 750.6L258 750.6L258 750.4L257 750.4L257 750.3L256 750.3L256 750.7L255 750.7L255 750.6L254 750.6L254 750.4L253 750.4L253 750.7L252 750.7L252 750.7L251 750.7L251 750.7L250 750.7L250 750.7L249 750.7L249 750.7L248 750.7L248 750.7L247 750.7L247 750.6L246 750.6L246 750.7L245 750.7L245 750.7L244 750.7L244 750.0L243 750.0L243 749.5L242 749.5L242 750.7L241 750.7L241 750.3L240 750.3L240 750.7L239 750.7L239 750.7L238 750.7L238 750.7L237 750.7L237 750.3L236 750.3L236 749.1L235 749.1L235 750.0L234 750.0L234 750.5L233 750.5L233 750.7L232 750.7L232 750.5L231 750.5L231 750.4L230 750.4L230 750.7L229 750.7L229 749.2L228 749.2L228 750.7L227 750.7L227 748.8L226 748.8L226 750.5L225 750.5L225 750.1L224 750.1L224 750.7L223 750.7L223 750.5L222 750.5L222 750.7L221 750.7L221 750.7L220 750.7L220 750.5L219 750.5L219 750.7L218 750.7L218 750.7L217 750.7L217 749.1L216 749.1L216 750.7L215 750.7L215 750.6L214 750.6L214 750.7L213 750.7L213 750.3L212 750.3L212 748.9L211 748.9L211 749.8L210 749.8L210 750.7L209 750.7L209 749.6L208 749.6L208 749.1L207 749.1L207 750.3L206 750.3L206 750.5L205 750.5L205 750.7L204 750.7L204 749.8L203 749.8L203 750.6L202 750.6L202 750.4L201 750.4L201 750.7L200 750.7L200 750.7L199 750.7L199 750.3L198 750.3L198 749.8L197 749.8L197 749.1L196 749.1L196 749.4L195 749.4L195 749.9L194 749.9L194 748.8L193 748.8Z" fill="#3a74d7"/><rect x="263.8" y="658.5" width="106.4" height="92.5" rx="4" fill="#b9d3f9" stroke="#8fb9f6" stroke-width="1"/><clipPath id="c3"><rect x="263.3" y="658.0" width="107.4" height="93.5" rx="4.5"/></clipPath><path clip-path="url(#c3)" d="M263.3 673.5L264.3 673.5L264.3 670.4L265.3 670.4L265.3 668.1L266.3 668.1L266.3 666.1L267.3 666.1L267.3 677.4L268.3 677.4L268.3 672.3L269.3 672.3L269.3 666.7L270.3 666.7L270.3 676.9L271.3 676.9L271.3 664.8L272.3 664.8L272.3 663.9L273.3 663.9L273.3 663.6L274.3 663.6L274.3 669.7L275.3 669.7L275.3 662.5L276.3 662.5L276.3 660.8L277.3 660.8L277.3 660.6L278.3 660.6L278.3 661.0L279.3 661.0L279.3 661.5L280.3 661.5L280.3 669.5L281.3 669.5L281.3 661.7L282.3 661.7L282.3 667.2L283.3 667.2L283.3 659.1L284.3 659.1L284.3 658.8L285.3 658.8L285.3 661.7L286.3 661.7L286.3 661.6L287.3 661.6L287.3 661.6L288.3 661.6L288.3 661.7L289.3 661.7L289.3 665.7L290.3 665.7L290.3 668.2L291.3 668.2L291.3 659.7L292.3 659.7L292.3 663.8L293.3 663.8L293.3 661.4L294.3 661.4L294.3 667.6L295.3 667.6L295.3 664.6L296.3 664.6L296.3 661.6L297.3 661.6L297.3 670.2L298.3 670.2L298.3 658.8L299.3 658.8L299.3 661.7L300.3 661.7L300.3 661.6L301.3 661.6L301.3 665.1L302.3 665.1L302.3 658.8L303.3 658.8L303.3 663.1L304.3 663.1L304.3 671.6L305.3 671.6L305.3 672.2L306.3 672.2L306.3 661.4L307.3 661.4L307.3 661.6L308.3 661.6L308.3 663.5L309.3 663.5L309.3 664.1L310.3 664.1L310.3 664.1L311.3 664.1L311.3 659.3L312.3 659.3L312.3 661.3L313.3 661.3L313.3 670.2L314.3 670.2L314.3 665.6L315.3 665.6L315.3 661.7L316.3 661.7L316.3 661.5L317.3 661.5L317.3 661.3L318.3 661.3L318.3 663.9L319.3 663.9L319.3 662.7L320.3 662.7L320.3 658.9L321.3 658.9L321.3 665.3L322.3 665.3L322.3 660.0L323.3 660.0L323.3 665.8L324.3 665.8L324.3 659.4L325.3 659.4L325.3 661.4L326.3 661.4L326.3 661.4L327.3 661.4L327.3 664.0L328.3 664.0L328.3 660.7L329.3 660.7L329.3 669.4L330.3 669.4L330.3 658.8L331.3 658.8L331.3 667.3L332.3 667.3L332.3 659.6L333.3 659.6L333.3 660.3L334.3 660.3L334.3 663.9L335.3 663.9L335.3 666.2L336.3 666.2L336.3 665.9L337.3 665.9L337.3 664.9L338.3 664.9L338.3 664.0L339.3 664.0L339.3 664.2L340.3 664.2L340.3 659.6L341.3 659.6L341.3 661.2L342.3 661.2L342.3 671.5L343.3 671.5L343.3 669.9L344.3 669.9L344.3 660.9L345.3 660.9L345.3 666.9L346.3 666.9L346.3 664.1L347.3 664.1L347.3 660.2L348.3 660.2L348.3 660.7L349.3 660.7L349.3 658.8L350.3 658.8L350.3 662.2L351.3 662.2L351.3 660.3L352.3 660.3L352.3 659.3L353.3 659.3L353.3 663.5L354.3 663.5L354.3 664.8L355.3 664.8L355.3 660.2L356.3 660.2L356.3 661.5L357.3 661.5L357.3 664.3L358.3 664.3L358.3 660.6L359.3 660.6L359.3 663.2L360.3 663.2L360.3 664.9L361.3 664.9L361.3 662.3L362.3 662.3L362.3 663.8L363.3 663.8L363.3 664.9L364.3 664.9L364.3 666.9L365.3 666.9L365.3 669.1L366.3 669.1L366.3 674.8L367.3 674.8L367.3 674.6L368.3 674.6L368.3 677.2L369.3 677.2L369.3 678.0L370.3 678.0L370.3 681.4L370.7 681.4L370.7 681.7L370.3 681.7L370.3 683.2L369.3 683.2L369.3 685.9L368.3 685.9L368.3 688.0L367.3 688.0L367.3 687.1L366.3 687.1L366.3 693.4L365.3 693.4L365.3 697.5L364.3 697.5L364.3 699.6L363.3 699.6L363.3 700.0L362.3 700.0L362.3 697.2L361.3 697.2L361.3 700.4L360.3 700.4L360.3 700.7L359.3 700.7L359.3 699.2L358.3 699.2L358.3 703.7L357.3 703.7L357.3 703.7L356.3 703.7L356.3 702.5L355.3 702.5L355.3 702.6L354.3 702.6L354.3 704.0L353.3 704.0L353.3 701.0L352.3 701.0L352.3 703.8L351.3 703.8L351.3 701.3L350.3 701.3L350.3 703.2L349.3 703.2L349.3 702.0L348.3 702.0L348.3 702.3L347.3 702.3L347.3 701.9L346.3 701.9L346.3 702.1L345.3 702.1L345.3 694.3L344.3 694.3L344.3 704.0L343.3 704.0L343.3 695.9L342.3 695.9L342.3 701.5L341.3 701.5L341.3 699.9L340.3 699.9L340.3 698.5L339.3 698.5L339.3 694.3L338.3 694.3L338.3 686.2L337.3 686.2L337.3 698.7L336.3 698.7L336.3 686.3L335.3 686.3L335.3 698.4L334.3 698.4L334.3 700.0L333.3 700.0L333.3 695.5L332.3 695.5L332.3 694.6L331.3 694.6L331.3 702.8L330.3 702.8L330.3 694.8L329.3 694.8L329.3 701.3L328.3 701.3L328.3 701.4L327.3 701.4L327.3 704.0L326.3 704.0L326.3 701.1L325.3 701.1L325.3 702.6L324.3 702.6L324.3 701.2L323.3 701.2L323.3 703.7L322.3 703.7L322.3 697.9L321.3 697.9L321.3 702.1L320.3 702.1L320.3 692.1L319.3 692.1L319.3 692.8L318.3 692.8L318.3 701.3L317.3 701.3L317.3 690.4L316.3 690.4L316.3 703.6L315.3 703.6L315.3 702.5L314.3 702.5L314.3 701.2L313.3 701.2L313.3 699.6L312.3 699.6L312.3 701.2L311.3 701.2L311.3 695.1L310.3 695.1L310.3 699.8L309.3 699.8L309.3 690.5L308.3 690.5L308.3 701.3L307.3 701.3L307.3 693.5L306.3 693.5L306.3 693.1L305.3 693.1L305.3 701.1L304.3 701.1L304.3 701.4L303.3 701.4L303.3 695.4L302.3 695.4L302.3 704.0L301.3 704.0L301.3 692.2L300.3 692.2L300.3 699.1L299.3 699.1L299.3 696.9L298.3 696.9L298.3 698.3L297.3 698.3L297.3 701.2L296.3 701.2L296.3 697.2L295.3 697.2L295.3 691.2L294.3 691.2L294.3 693.7L293.3 693.7L293.3 695.7L292.3 695.7L292.3 691.1L291.3 691.1L291.3 702.7L290.3 702.7L290.3 692.4L289.3 692.4L289.3 701.3L288.3 701.3L288.3 699.7L287.3 699.7L287.3 703.5L286.3 703.5L286.3 700.0L285.3 700.0L285.3 699.3L284.3 699.3L284.3 701.4L283.3 701.4L283.3 703.9L282.3 703.9L282.3 701.1L281.3 701.1L281.3 701.1L280.3 701.1L280.3 697.5L279.3 697.5L279.3 703.5L278.3 703.5L278.3 701.3L277.3 701.3L277.3 702.6L276.3 702.6L276.3 700.9L275.3 700.9L275.3 699.6L274.3 699.6L274.3 699.4L273.3 699.4L273.3 698.3L272.3 698.3L272.3 697.7L271.3 697.7L271.3 686.0L270.3 686.0L270.3 697.5L269.3 697.5L269.3 687.6L268.3 687.6L268.3 686.9L267.3 686.9L267.3 693.9L266.3 693.9L266.3 693.0L265.3 693.0L265.3 692.0L264.3 692.0L264.3 687.9L263.3 687.9ZM263.3 721.1L264.3 721.1L264.3 715.5L265.3 715.5L265.3 722.4L266.3 722.4L266.3 715.5L267.3 715.5L267.3 714.4L268.3 714.4L268.3 712.0L269.3 712.0L269.3 717.2L270.3 717.2L270.3 711.1L271.3 711.1L271.3 721.1L272.3 721.1L272.3 716.4L273.3 716.4L273.3 708.9L274.3 708.9L274.3 707.9L275.3 707.9L275.3 719.4L276.3 719.4L276.3 705.8L277.3 705.8L277.3 708.4L278.3 708.4L278.3 705.7L279.3 705.7L279.3 705.5L280.3 705.5L280.3 713.2L281.3 713.2L281.3 707.3L282.3 707.3L282.3 718.7L283.3 718.7L283.3 708.4L284.3 708.4L284.3 708.4L285.3 708.4L285.3 716.3L286.3 716.3L286.3 708.1L287.3 708.1L287.3 708.4L288.3 708.4L288.3 706.3L289.3 706.3L289.3 708.3L290.3 708.3L290.3 707.5L291.3 707.5L291.3 705.5L292.3 705.5L292.3 716.9L293.3 716.9L293.3 705.6L294.3 705.6L294.3 712.6L295.3 712.6L295.3 715.8L296.3 715.8L296.3 708.4L297.3 708.4L297.3 710.0L298.3 710.0L298.3 714.0L299.3 714.0L299.3 708.4L300.3 708.4L300.3 706.8L301.3 706.8L301.3 706.9L302.3 706.9L302.3 705.9L303.3 705.9L303.3 715.4L304.3 715.4L304.3 713.4L305.3 713.4L305.3 708.3L306.3 708.3L306.3 708.1L307.3 708.1L307.3 712.7L308.3 712.7L308.3 716.2L309.3 716.2L309.3 706.0L310.3 706.0L310.3 719.6L311.3 719.6L311.3 710.1L312.3 710.1L312.3 711.7L313.3 711.7L313.3 713.7L314.3 713.7L314.3 712.6L315.3 712.6L315.3 709.4L316.3 709.4L316.3 710.2L317.3 710.2L317.3 706.9L318.3 706.9L318.3 705.7L319.3 705.7L319.3 706.6L320.3 706.6L320.3 706.1L321.3 706.1L321.3 709.4L322.3 709.4L322.3 708.3L323.3 708.3L323.3 708.4L324.3 708.4L324.3 708.2L325.3 708.2L325.3 708.4L326.3 708.4L326.3 711.5L327.3 711.5L327.3 706.9L328.3 706.9L328.3 708.1L329.3 708.1L329.3 712.9L330.3 712.9L330.3 705.5L331.3 705.5L331.3 706.0L332.3 706.0L332.3 708.3L333.3 708.3L333.3 708.1L334.3 708.1L334.3 714.1L335.3 714.1L335.3 721.5L336.3 721.5L336.3 713.9L337.3 713.9L337.3 713.7L338.3 713.7L338.3 721.4L339.3 721.4L339.3 713.3L340.3 713.3L340.3 712.8L341.3 712.8L341.3 705.6L342.3 705.6L342.3 706.1L343.3 706.1L343.3 707.5L344.3 707.5L344.3 711.1L345.3 711.1L345.3 708.9L346.3 708.9L346.3 707.5L347.3 707.5L347.3 706.6L348.3 706.6L348.3 709.8L349.3 709.8L349.3 707.7L350.3 707.7L350.3 708.1L351.3 708.1L351.3 709.6L352.3 709.6L352.3 706.5L353.3 706.5L353.3 711.3L354.3 711.3L354.3 705.5L355.3 705.5L355.3 707.0L356.3 707.0L356.3 707.8L357.3 707.8L357.3 706.7L358.3 706.7L358.3 707.5L359.3 707.5L359.3 709.7L360.3 709.7L360.3 712.2L361.3 712.2L361.3 709.1L362.3 709.1L362.3 709.9L363.3 709.9L363.3 711.1L364.3 711.1L364.3 713.8L365.3 713.8L365.3 716.2L366.3 716.2L366.3 722.3L367.3 722.3L367.3 722.9L368.3 722.9L368.3 722.2L369.3 722.2L369.3 726.6L370.3 726.6L370.3 728.1L370.7 728.1L370.7 728.1L370.3 728.1L370.3 728.1L369.3 728.1L369.3 730.3L368.3 730.3L368.3 734.7L367.3 734.7L367.3 737.6L366.3 737.6L366.3 736.4L365.3 736.4L365.3 739.8L364.3 739.8L364.3 744.3L363.3 744.3L363.3 745.8L362.3 745.8L362.3 743.5L361.3 743.5L361.3 746.2L360.3 746.2L360.3 747.2L359.3 747.2L359.3 749.0L358.3 749.0L358.3 749.0L357.3 749.0L357.3 749.0L356.3 749.0L356.3 745.3L355.3 745.3L355.3 750.7L354.3 750.7L354.3 748.2L353.3 748.2L353.3 745.6L352.3 745.6L352.3 750.5L351.3 750.5L351.3 750.7L350.3 750.7L350.3 749.0L349.3 749.0L349.3 746.3L348.3 746.3L348.3 748.9L347.3 748.9L347.3 748.7L346.3 748.7L346.3 746.8L345.3 746.8L345.3 748.6L344.3 748.6L344.3 750.7L343.3 750.7L343.3 748.6L342.3 748.6L342.3 748.4L341.3 748.4L341.3 746.9L340.3 746.9L340.3 749.1L339.3 749.1L339.3 741.2L338.3 741.2L338.3 742.8L337.3 742.8L337.3 743.0L336.3 743.0L336.3 732.5L335.3 732.5L335.3 746.0L334.3 746.0L334.3 749.2L333.3 749.2L333.3 742.7L332.3 742.7L332.3 742.6L331.3 742.6L331.3 750.7L330.3 750.7L330.3 748.6L329.3 748.6L329.3 748.2L328.3 748.2L328.3 748.0L327.3 748.0L327.3 748.0L326.3 748.0L326.3 747.9L325.3 747.9L325.3 741.6L324.3 741.6L324.3 750.7L323.3 750.7L323.3 745.3L322.3 745.3L322.3 746.7L321.3 746.7L321.3 747.8L320.3 747.8L320.3 749.9L319.3 749.9L319.3 750.0L318.3 750.0L318.3 747.9L317.3 747.9L317.3 748.0L316.3 748.0L316.3 741.2L315.3 741.2L315.3 744.3L314.3 744.3L314.3 741.5L313.3 741.5L313.3 750.7L312.3 750.7L312.3 740.0L311.3 740.0L311.3 750.7L310.3 750.7L310.3 746.6L309.3 746.6L309.3 738.4L308.3 738.4L308.3 739.8L307.3 739.8L307.3 747.9L306.3 747.9L306.3 743.7L305.3 743.7L305.3 750.7L304.3 750.7L304.3 736.9L303.3 736.9L303.3 748.1L302.3 748.1L302.3 750.7L301.3 750.7L301.3 748.1L300.3 748.1L300.3 739.9L299.3 739.9L299.3 748.3L298.3 748.3L298.3 747.9L297.3 747.9L297.3 745.4L296.3 745.4L296.3 744.1L295.3 744.1L295.3 748.3L294.3 748.3L294.3 748.0L293.3 748.0L293.3 744.2L292.3 744.2L292.3 750.7L291.3 750.7L291.3 749.9L290.3 749.9L290.3 738.8L289.3 738.8L289.3 740.8L288.3 740.8L288.3 741.5L287.3 741.5L287.3 748.1L286.3 748.1L286.3 750.2L285.3 750.2L285.3 748.0L284.3 748.0L284.3 741.2L283.3 741.2L283.3 741.3L282.3 741.3L282.3 736.6L281.3 736.6L281.3 748.1L280.3 748.1L280.3 739.9L279.3 739.9L279.3 739.2L278.3 739.2L278.3 750.6L277.3 750.6L277.3 747.9L276.3 747.9L276.3 747.0L275.3 747.0L275.3 746.4L274.3 746.4L274.3 736.8L273.3 736.8L273.3 746.3L272.3 746.3L272.3 744.3L271.3 744.3L271.3 733.4L270.3 733.4L270.3 733.0L269.3 733.0L269.3 731.6L268.3 731.6L268.3 741.2L267.3 741.2L267.3 736.9L266.3 736.9L266.3 738.7L265.3 738.7L265.3 740.6L264.3 740.6L264.3 740.0L263.3 740.0Z" fill="#3a74d7"/><rect x="371.9" y="658.5" width="123.6" height="92.5" rx="4" fill="#b9d3f9" stroke="#8fb9f6" stroke-width="1"/><clipPath id="c4"><rect x="371.4" y="658.0" width="124.6" height="93.5" rx="4.5"/></clipPath><path clip-path="url(#c4)" d="M371.4 659.7L372.4 659.7L372.4 659.6L373.4 659.6L373.4 661.0L374.4 661.0L374.4 659.3L375.4 659.3L375.4 661.7L376.4 661.7L376.4 659.7L377.4 659.7L377.4 659.4L378.4 659.4L378.4 658.9L379.4 658.9L379.4 660.7L380.4 660.7L380.4 659.2L381.4 659.2L381.4 658.8L382.4 658.8L382.4 658.9L383.4 658.9L383.4 659.5L384.4 659.5L384.4 659.7L385.4 659.7L385.4 659.8L386.4 659.8L386.4 659.5L387.4 659.5L387.4 660.0L388.4 660.0L388.4 659.6L389.4 659.6L389.4 659.2L390.4 659.2L390.4 659.8L391.4 659.8L391.4 659.1L392.4 659.1L392.4 660.0L393.4 660.0L393.4 659.5L394.4 659.5L394.4 671.2L395.4 671.2L395.4 669.2L396.4 669.2L396.4 677.0L397.4 677.0L397.4 672.7L398.4 672.7L398.4 670.8L399.4 670.8L399.4 667.9L400.4 667.9L400.4 669.1L401.4 669.1L401.4 670.3L402.4 670.3L402.4 670.3L403.4 670.3L403.4 667.7L404.4 667.7L404.4 667.3L405.4 667.3L405.4 670.3L406.4 670.3L406.4 670.3L407.4 670.3L407.4 674.8L408.4 674.8L408.4 670.0L409.4 670.0L409.4 671.1L410.4 671.1L410.4 669.6L411.4 669.6L411.4 667.2L412.4 667.2L412.4 674.9L413.4 674.9L413.4 667.8L414.4 667.8L414.4 667.3L415.4 667.3L415.4 672.2L416.4 672.2L416.4 671.7L417.4 671.7L417.4 665.6L418.4 665.6L418.4 665.0L419.4 665.0L419.4 666.5L420.4 666.5L420.4 662.4L421.4 662.4L421.4 663.2L422.4 663.2L422.4 660.5L423.4 660.5L423.4 662.2L424.4 662.2L424.4 660.1L425.4 660.1L425.4 659.9L426.4 659.9L426.4 660.9L427.4 660.9L427.4 663.8L428.4 663.8L428.4 659.9L429.4 659.9L429.4 666.0L430.4 666.0L430.4 664.5L431.4 664.5L431.4 658.8L432.4 658.8L432.4 658.8L433.4 658.8L433.4 658.8L434.4 658.8L434.4 660.3L435.4 660.3L435.4 662.4L436.4 662.4L436.4 662.2L437.4 662.2L437.4 658.8L438.4 658.8L438.4 664.5L439.4 664.5L439.4 660.4L440.4 660.4L440.4 659.5L441.4 659.5L441.4 659.6L442.4 659.6L442.4 659.4L443.4 659.4L443.4 658.8L444.4 658.8L444.4 659.6L445.4 659.6L445.4 660.7L446.4 660.7L446.4 658.8L447.4 658.8L447.4 659.4L448.4 659.4L448.4 662.9L449.4 662.9L449.4 661.3L450.4 661.3L450.4 659.5L451.4 659.5L451.4 658.8L452.4 658.8L452.4 660.9L453.4 660.9L453.4 665.7L454.4 665.7L454.4 664.7L455.4 664.7L455.4 659.6L456.4 659.6L456.4 660.8L457.4 660.8L457.4 659.5L458.4 659.5L458.4 663.5L459.4 663.5L459.4 658.8L460.4 658.8L460.4 658.8L461.4 658.8L461.4 659.0L462.4 659.0L462.4 659.2L463.4 659.2L463.4 659.6L464.4 659.6L464.4 658.8L465.4 658.8L465.4 659.5L466.4 659.5L466.4 664.3L467.4 664.3L467.4 659.3L468.4 659.3L468.4 659.6L469.4 659.6L469.4 658.8L470.4 658.8L470.4 659.7L471.4 659.7L471.4 659.4L472.4 659.4L472.4 659.3L473.4 659.3L473.4 659.6L474.4 659.6L474.4 659.5L475.4 659.5L475.4 662.2L476.4 662.2L476.4 659.3L477.4 659.3L477.4 661.1L478.4 661.1L478.4 658.8L479.4 658.8L479.4 660.0L480.4 660.0L480.4 658.8L481.4 658.8L481.4 661.5L482.4 661.5L482.4 659.3L483.4 659.3L483.4 658.8L484.4 658.8L484.4 659.5L485.4 659.5L485.4 659.5L486.4 659.5L486.4 659.6L487.4 659.6L487.4 658.8L488.4 658.8L488.4 659.3L489.4 659.3L489.4 658.8L490.4 658.8L490.4 658.8L491.4 658.8L491.4 664.2L492.4 664.2L492.4 665.0L493.4 665.0L493.4 659.7L494.4 659.7L494.4 663.9L495.4 663.9L495.4 659.5L496 659.5L496 700.2L495.4 700.2L495.4 703.4L494.4 703.4L494.4 703.3L493.4 703.3L493.4 701.7L492.4 701.7L492.4 704.0L491.4 704.0L491.4 699.7L490.4 699.7L490.4 700.3L489.4 700.3L489.4 703.2L488.4 703.2L488.4 704.0L487.4 704.0L487.4 703.3L486.4 703.3L486.4 703.1L485.4 703.1L485.4 704.0L484.4 704.0L484.4 702.3L483.4 702.3L483.4 703.3L482.4 703.3L482.4 702.6L481.4 702.6L481.4 702.5L480.4 702.5L480.4 703.3L479.4 703.3L479.4 704.0L478.4 704.0L478.4 702.5L477.4 702.5L477.4 698.7L476.4 698.7L476.4 703.2L475.4 703.2L475.4 701.3L474.4 701.3L474.4 697.6L473.4 697.6L473.4 700.4L472.4 700.4L472.4 703.4L471.4 703.4L471.4 704.0L470.4 704.0L470.4 703.3L469.4 703.3L469.4 700.4L468.4 700.4L468.4 701.2L467.4 701.2L467.4 698.7L466.4 698.7L466.4 702.3L465.4 702.3L465.4 699.6L464.4 699.6L464.4 701.2L463.4 701.2L463.4 700.5L462.4 700.5L462.4 700.8L461.4 700.8L461.4 703.3L460.4 703.3L460.4 704.0L459.4 704.0L459.4 703.1L458.4 703.1L458.4 701.0L457.4 701.0L457.4 697.6L456.4 697.6L456.4 703.4L455.4 703.4L455.4 703.4L454.4 703.4L454.4 703.3L453.4 703.3L453.4 704.0L452.4 704.0L452.4 703.4L451.4 703.4L451.4 703.9L450.4 703.9L450.4 703.2L449.4 703.2L449.4 697.7L448.4 697.7L448.4 703.1L447.4 703.1L447.4 704.0L446.4 704.0L446.4 703.3L445.4 703.3L445.4 702.1L444.4 702.1L444.4 703.2L443.4 703.2L443.4 704.0L442.4 704.0L442.4 704.0L441.4 704.0L441.4 703.1L440.4 703.1L440.4 703.8L439.4 703.8L439.4 699.8L438.4 699.8L438.4 703.2L437.4 703.2L437.4 704.0L436.4 704.0L436.4 704.0L435.4 704.0L435.4 703.2L434.4 703.2L434.4 701.8L433.4 701.8L433.4 703.4L432.4 703.4L432.4 701.3L431.4 701.3L431.4 697.4L430.4 697.4L430.4 703.4L429.4 703.4L429.4 703.4L428.4 703.4L428.4 694.3L427.4 694.3L427.4 704.0L426.4 704.0L426.4 701.4L425.4 701.4L425.4 703.4L424.4 703.4L424.4 703.0L423.4 703.0L423.4 700.1L422.4 700.1L422.4 692.4L421.4 692.4L421.4 699.7L420.4 699.7L420.4 698.4L419.4 698.4L419.4 698.4L418.4 698.4L418.4 692.9L417.4 692.9L417.4 694.5L416.4 694.5L416.4 696.0L415.4 696.0L415.4 690.4L414.4 690.4L414.4 687.6L413.4 687.6L413.4 685.0L412.4 685.0L412.4 684.5L411.4 684.5L411.4 692.1L410.4 692.1L410.4 692.8L409.4 692.8L409.4 684.8L408.4 684.8L408.4 693.0L407.4 693.0L407.4 685.7L406.4 685.7L406.4 690.6L405.4 690.6L405.4 691.5L404.4 691.5L404.4 693.5L403.4 693.5L403.4 687.9L402.4 687.9L402.4 692.7L401.4 692.7L401.4 693.5L400.4 693.5L400.4 695.2L399.4 695.2L399.4 687.3L398.4 687.3L398.4 694.4L397.4 694.4L397.4 693.7L396.4 693.7L396.4 686.9L395.4 686.9L395.4 684.4L394.4 684.4L394.4 704.0L393.4 704.0L393.4 703.2L392.4 703.2L392.4 704.0L391.4 704.0L391.4 702.9L390.4 702.9L390.4 703.5L389.4 703.5L389.4 704.0L388.4 704.0L388.4 701.6L387.4 701.6L387.4 703.1L386.4 703.1L386.4 703.7L385.4 703.7L385.4 701.0L384.4 701.0L384.4 703.4L383.4 703.4L383.4 703.8L382.4 703.8L382.4 703.1L381.4 703.1L381.4 703.4L380.4 703.4L380.4 699.6L379.4 699.6L379.4 703.0L378.4 703.0L378.4 703.4L377.4 703.4L377.4 701.9L376.4 701.9L376.4 701.6L375.4 701.6L375.4 703.8L374.4 703.8L374.4 703.6L373.4 703.6L373.4 703.1L372.4 703.1L372.4 704.0L371.4 704.0ZM371.4 706.7L372.4 706.7L372.4 707.9L373.4 707.9L373.4 707.5L374.4 707.5L374.4 705.5L375.4 705.5L375.4 706.4L376.4 706.4L376.4 705.5L377.4 705.5L377.4 706.2L378.4 706.2L378.4 708.9L379.4 708.9L379.4 707.2L380.4 707.2L380.4 706.7L381.4 706.7L381.4 706.2L382.4 706.2L382.4 705.7L383.4 705.7L383.4 708.6L384.4 708.6L384.4 707.1L385.4 707.1L385.4 706.4L386.4 706.4L386.4 706.0L387.4 706.0L387.4 706.1L388.4 706.1L388.4 705.5L389.4 705.5L389.4 706.3L390.4 706.3L390.4 706.0L391.4 706.0L391.4 706.2L392.4 706.2L392.4 706.3L393.4 706.3L393.4 705.8L394.4 705.8L394.4 715.4L395.4 715.4L395.4 726.5L396.4 726.5L396.4 716.3L397.4 716.3L397.4 717.4L398.4 717.4L398.4 717.5L399.4 717.5L399.4 717.6L400.4 717.6L400.4 715.1L401.4 715.1L401.4 717.1L402.4 717.1L402.4 717.2L403.4 717.2L403.4 717.1L404.4 717.1L404.4 720.6L405.4 720.6L405.4 715.9L406.4 715.9L406.4 721.1L407.4 721.1L407.4 714.1L408.4 714.1L408.4 722.3L409.4 722.3L409.4 725.9L410.4 725.9L410.4 715.2L411.4 715.2L411.4 718.8L412.4 718.8L412.4 715.1L413.4 715.1L413.4 716.4L414.4 716.4L414.4 714.1L415.4 714.1L415.4 711.2L416.4 711.2L416.4 711.7L417.4 711.7L417.4 719.0L418.4 719.0L418.4 717.9L419.4 717.9L419.4 711.3L420.4 711.3L420.4 718.9L421.4 718.9L421.4 711.6L422.4 711.6L422.4 709.4L423.4 709.4L423.4 717.8L424.4 717.8L424.4 708.1L425.4 708.1L425.4 705.5L426.4 705.5L426.4 707.6L427.4 707.6L427.4 705.6L428.4 705.6L428.4 715.7L429.4 715.7L429.4 705.5L430.4 705.5L430.4 706.4L431.4 706.4L431.4 706.9L432.4 706.9L432.4 706.2L433.4 706.2L433.4 706.8L434.4 706.8L434.4 705.5L435.4 705.5L435.4 705.8L436.4 705.8L436.4 706.1L437.4 706.1L437.4 706.4L438.4 706.4L438.4 712.3L439.4 712.3L439.4 705.9L440.4 705.9L440.4 708.2L441.4 708.2L441.4 705.9L442.4 705.9L442.4 705.5L443.4 705.5L443.4 705.9L444.4 705.9L444.4 711.4L445.4 711.4L445.4 706.1L446.4 706.1L446.4 706.4L447.4 706.4L447.4 709.3L448.4 709.3L448.4 710.6L449.4 710.6L449.4 712.1L450.4 712.1L450.4 705.5L451.4 705.5L451.4 706.1L452.4 706.1L452.4 711.3L453.4 711.3L453.4 710.3L454.4 710.3L454.4 705.5L455.4 705.5L455.4 708.3L456.4 708.3L456.4 711.7L457.4 711.7L457.4 705.5L458.4 705.5L458.4 706.1L459.4 706.1L459.4 706.2L460.4 706.2L460.4 705.5L461.4 705.5L461.4 706.4L462.4 706.4L462.4 710.5L463.4 710.5L463.4 709.8L464.4 709.8L464.4 708.9L465.4 708.9L465.4 706.2L466.4 706.2L466.4 706.3L467.4 706.3L467.4 705.9L468.4 705.9L468.4 705.8L469.4 705.8L469.4 706.3L470.4 706.3L470.4 706.3L471.4 706.3L471.4 707.7L472.4 707.7L472.4 706.3L473.4 706.3L473.4 705.5L474.4 705.5L474.4 706.8L475.4 706.8L475.4 706.1L476.4 706.1L476.4 710.1L477.4 710.1L477.4 710.0L478.4 710.0L478.4 711.7L479.4 711.7L479.4 712.2L480.4 712.2L480.4 705.5L481.4 705.5L481.4 705.6L482.4 705.6L482.4 711.0L483.4 711.0L483.4 706.4L484.4 706.4L484.4 705.5L485.4 705.5L485.4 708.7L486.4 708.7L486.4 705.5L487.4 705.5L487.4 708.6L488.4 708.6L488.4 705.5L489.4 705.5L489.4 706.3L490.4 706.3L490.4 709.0L491.4 709.0L491.4 709.8L492.4 709.8L492.4 711.2L493.4 711.2L493.4 707.7L494.4 707.7L494.4 705.7L495.4 705.7L495.4 705.5L496 705.5L496 750.7L495.4 750.7L495.4 750.7L494.4 750.7L494.4 749.2L493.4 749.2L493.4 748.4L492.4 748.4L492.4 750.7L491.4 750.7L491.4 749.8L490.4 749.8L490.4 750.7L489.4 750.7L489.4 750.7L488.4 750.7L488.4 750.7L487.4 750.7L487.4 750.1L486.4 750.1L486.4 750.7L485.4 750.7L485.4 750.7L484.4 750.7L484.4 749.8L483.4 749.8L483.4 747.6L482.4 747.6L482.4 745.2L481.4 745.2L481.4 749.3L480.4 749.3L480.4 750.7L479.4 750.7L479.4 749.8L478.4 749.8L478.4 745.3L477.4 745.3L477.4 749.9L476.4 749.9L476.4 746.4L475.4 746.4L475.4 745.0L474.4 745.0L474.4 750.1L473.4 750.1L473.4 749.3L472.4 749.3L472.4 750.7L471.4 750.7L471.4 750.7L470.4 750.7L470.4 748.1L469.4 748.1L469.4 750.0L468.4 750.0L468.4 749.2L467.4 749.2L467.4 750.5L466.4 750.5L466.4 750.3L465.4 750.3L465.4 749.9L464.4 749.9L464.4 747.1L463.4 747.1L463.4 750.0L462.4 750.0L462.4 746.1L461.4 746.1L461.4 749.9L460.4 749.9L460.4 750.1L459.4 750.1L459.4 749.3L458.4 749.3L458.4 749.9L457.4 749.9L457.4 749.9L456.4 749.9L456.4 746.9L455.4 746.9L455.4 749.9L454.4 749.9L454.4 748.9L453.4 748.9L453.4 750.7L452.4 750.7L452.4 748.9L451.4 748.9L451.4 745.5L450.4 745.5L450.4 749.8L449.4 749.8L449.4 750.3L448.4 750.3L448.4 746.5L447.4 746.5L447.4 750.1L446.4 750.1L446.4 750.7L445.4 750.7L445.4 747.5L444.4 747.5L444.4 750.7L443.4 750.7L443.4 750.2L442.4 750.2L442.4 750.6L441.4 750.6L441.4 744.5L440.4 744.5L440.4 750.7L439.4 750.7L439.4 749.8L438.4 749.8L438.4 750.1L437.4 750.1L437.4 750.1L436.4 750.1L436.4 746.2L435.4 746.2L435.4 744.8L434.4 744.8L434.4 750.7L433.4 750.7L433.4 748.4L432.4 748.4L432.4 750.7L431.4 750.7L431.4 750.3L430.4 750.3L430.4 740.1L429.4 740.1L429.4 741.7L428.4 741.7L428.4 750.2L427.4 750.2L427.4 740.9L426.4 740.9L426.4 748.4L425.4 748.4L425.4 748.1L424.4 748.1L424.4 747.4L423.4 747.4L423.4 738.8L422.4 738.8L422.4 746.4L421.4 746.4L421.4 739.8L420.4 739.8L420.4 745.0L419.4 745.0L419.4 737.8L418.4 737.8L418.4 741.4L417.4 741.4L417.4 743.5L416.4 743.5L416.4 733.0L415.4 733.0L415.4 736.5L414.4 736.5L414.4 741.6L413.4 741.6L413.4 741.1L412.4 741.1L412.4 740.5L411.4 740.5L411.4 740.4L410.4 740.4L410.4 734.4L409.4 734.4L409.4 738.5L408.4 738.5L408.4 729.4L407.4 729.4L407.4 733.2L406.4 733.2L406.4 739.4L405.4 739.4L405.4 742.5L404.4 742.5L404.4 739.1L403.4 739.1L403.4 738.9L402.4 738.9L402.4 738.9L401.4 738.9L401.4 738.9L400.4 738.9L400.4 739.1L399.4 739.1L399.4 738.6L398.4 738.6L398.4 738.6L397.4 738.6L397.4 737.3L396.4 737.3L396.4 741.1L395.4 741.1L395.4 738.5L394.4 738.5L394.4 749.1L393.4 749.1L393.4 749.8L392.4 749.8L392.4 748.4L391.4 748.4L391.4 749.9L390.4 749.9L390.4 750.1L389.4 750.1L389.4 750.0L388.4 750.0L388.4 747.3L387.4 747.3L387.4 749.9L386.4 749.9L386.4 749.9L385.4 749.9L385.4 749.8L384.4 749.8L384.4 746.4L383.4 746.4L383.4 750.7L382.4 750.7L382.4 749.9L381.4 749.9L381.4 749.8L380.4 749.8L380.4 749.8L379.4 749.8L379.4 750.2L378.4 750.2L378.4 749.5L377.4 749.5L377.4 750.6L376.4 750.6L376.4 749.1L375.4 749.1L375.4 749.8L374.4 749.8L374.4 750.7L373.4 750.7L373.4 747.6L372.4 747.6L372.4 749.8L371.4 749.8Z" fill="#3a74d7"/><rect x="498.5" y="658.5" width="83.0" height="92.5" rx="4" fill="#b9d3f9" stroke="#8fb9f6" stroke-width="1"/><clipPath id="c5"><rect x="498.0" y="658.0" width="84.0" height="93.5" rx="4.5"/></clipPath><path clip-path="url(#c5)" d="M498 661.4L499 661.4L499 660.9L500 660.9L500 662.9L501 662.9L501 663.1L502 663.1L502 663.0L503 663.0L503 663.9L504 663.9L504 663.0L505 663.0L505 663.0L506 663.0L506 661.7L507 661.7L507 663.0L508 663.0L508 666.2L509 666.2L509 662.9L510 662.9L510 660.8L511 660.8L511 669.2L512 669.2L512 661.9L513 661.9L513 661.1L514 661.1L514 661.7L515 661.7L515 669.0L516 669.0L516 661.1L517 661.1L517 662.2L518 662.2L518 662.0L519 662.0L519 661.9L520 661.9L520 669.4L521 669.4L521 668.3L522 668.3L522 669.9L523 669.9L523 664.1L524 664.1L524 664.4L525 664.4L525 671.8L526 671.8L526 664.7L527 664.7L527 662.1L528 662.1L528 663.9L529 663.9L529 662.5L530 662.5L530 662.1L531 662.1L531 661.6L532 661.6L532 665.1L533 665.1L533 661.6L534 661.6L534 660.4L535 660.4L535 660.3L536 660.3L536 662.0L537 662.0L537 666.0L538 666.0L538 665.4L539 665.4L539 662.0L540 662.0L540 662.0L541 662.0L541 662.1L542 662.1L542 661.8L543 661.8L543 665.5L544 665.5L544 660.2L545 660.2L545 662.0L546 662.0L546 660.0L547 660.0L547 661.1L548 661.1L548 665.0L549 665.0L549 661.9L550 661.9L550 660.9L551 660.9L551 662.0L552 662.0L552 664.0L553 664.0L553 661.9L554 661.9L554 663.1L555 663.1L555 661.9L556 661.9L556 661.7L557 661.7L557 666.9L558 666.9L558 660.2L559 660.2L559 662.8L560 662.8L560 660.9L561 660.9L561 661.0L562 661.0L562 662.2L563 662.2L563 660.7L564 660.7L564 661.3L565 661.3L565 660.9L566 660.9L566 660.0L567 660.0L567 660.9L568 660.9L568 662.1L569 662.1L569 660.9L570 660.9L570 662.5L571 662.5L571 664.0L572 664.0L572 664.4L573 664.4L573 665.4L574 665.4L574 668.5L575 668.5L575 667.6L576 667.6L576 671.3L577 671.3L577 674.8L578 674.8L578 676.0L579 676.0L579 672.1L580 672.1L580 676.6L581 676.6L581 678.1L582 678.1L582 682.8L581 682.8L581 682.5L580 682.5L580 688.6L579 688.6L579 692.0L578 692.0L578 690.4L577 690.4L577 695.7L576 695.7L576 692.1L575 692.1L575 696.2L574 696.2L574 691.7L573 691.7L573 698.1L572 698.1L572 696.2L571 696.2L571 701.5L570 701.5L570 701.6L569 701.6L569 700.6L568 700.6L568 702.5L567 702.5L567 698.7L566 698.7L566 698.7L565 698.7L565 702.0L564 702.0L564 699.8L563 699.8L563 700.6L562 700.6L562 700.7L561 700.7L561 702.1L560 702.1L560 697.5L559 697.5L559 702.0L558 702.0L558 700.9L557 700.9L557 700.9L556 700.9L556 696.2L555 696.2L555 695.1L554 695.1L554 701.2L553 701.2L553 700.8L552 700.8L552 697.7L551 697.7L551 701.8L550 701.8L550 701.4L549 701.4L549 701.2L548 701.2L548 695.9L547 695.9L547 701.6L546 701.6L546 699.7L545 699.7L545 700.8L544 700.8L544 694.8L543 694.8L543 697.6L542 697.6L542 700.9L541 700.9L541 702.0L540 702.0L540 696.5L539 696.5L539 699.0L538 699.0L538 700.1L537 700.1L537 701.3L536 701.3L536 700.8L535 700.8L535 696.5L534 696.5L534 699.4L533 699.4L533 700.8L532 700.8L532 700.8L531 700.8L531 698.3L530 698.3L530 700.3L529 700.3L529 696.5L528 696.5L528 697.5L527 697.5L527 696.6L526 696.6L526 696.4L525 696.4L525 697.0L524 697.0L524 698.9L523 698.9L523 692.8L522 692.8L522 700.4L521 700.4L521 700.3L520 700.3L520 699.6L519 699.6L519 700.5L518 700.5L518 698.1L517 698.1L517 695.7L516 695.7L516 700.5L515 700.5L515 699.7L514 699.7L514 696.4L513 696.4L513 697.4L512 697.4L512 699.8L511 699.8L511 694.4L510 694.4L510 699.9L509 699.9L509 698.5L508 698.5L508 699.8L507 699.8L507 695.5L506 695.5L506 701.0L505 701.0L505 699.8L504 699.8L504 696.1L503 696.1L503 699.7L502 699.7L502 693.8L501 693.8L501 697.0L500 697.0L500 701.0L499 701.0L499 695.2L498 695.2ZM498 709.7L499 709.7L499 707.8L500 707.8L500 708.6L501 708.6L501 711.5L502 711.5L502 708.1L503 708.1L503 708.2L504 708.2L504 715.0L505 715.0L505 709.2L506 709.2L506 712.2L507 712.2L507 712.3L508 712.3L508 714.2L509 714.2L509 709.8L510 709.8L510 709.7L511 709.7L511 711.9L512 711.9L512 709.6L513 709.6L513 709.8L514 709.8L514 713.6L515 713.6L515 709.0L516 709.0L516 711.4L517 711.4L517 709.6L518 709.6L518 708.2L519 708.2L519 711.1L520 711.1L520 711.1L521 711.1L521 710.5L522 710.5L522 712.4L523 712.4L523 711.9L524 711.9L524 717.6L525 717.6L525 715.1L526 715.1L526 717.4L527 717.4L527 709.1L528 709.1L528 714.0L529 714.0L529 711.1L530 711.1L530 708.0L531 708.0L531 711.3L532 711.3L532 714.8L533 714.8L533 708.8L534 708.8L534 707.3L535 707.3L535 712.8L536 712.8L536 707.5L537 707.5L537 708.6L538 708.6L538 707.1L539 707.1L539 711.3L540 711.3L540 708.0L541 708.0L541 708.8L542 708.8L542 706.7L543 706.7L543 707.7L544 707.7L544 708.8L545 708.8L545 708.8L546 708.8L546 711.9L547 711.9L547 710.1L548 710.1L548 707.2L549 707.2L549 707.6L550 707.6L550 707.1L551 707.1L551 713.3L552 713.3L552 713.4L553 713.4L553 707.3L554 707.3L554 708.6L555 708.6L555 708.8L556 708.8L556 708.9L557 708.9L557 708.6L558 708.6L558 708.6L559 708.6L559 708.7L560 708.7L560 708.9L561 708.9L561 708.8L562 708.8L562 706.6L563 706.6L563 707.0L564 707.0L564 714.4L565 714.4L565 712.5L566 712.5L566 707.1L567 707.1L567 707.7L568 707.7L568 713.3L569 713.3L569 713.7L570 713.7L570 709.1L571 709.1L571 715.4L572 715.4L572 710.9L573 710.9L573 711.0L574 711.0L574 712.4L575 712.4L575 713.3L576 713.3L576 719.4L577 719.4L577 721.1L578 721.1L578 717.1L579 717.1L579 722.7L580 722.7L580 724.4L581 724.4L581 727.1L582 727.1L582 730.1L581 730.1L581 733.7L580 733.7L580 735.8L579 735.8L579 737.0L578 737.0L578 738.8L577 738.8L577 736.0L576 736.0L576 743.5L575 743.5L575 741.8L574 741.8L574 740.5L573 740.5L573 741.2L572 741.2L572 745.5L571 745.5L571 744.1L570 744.1L570 747.4L569 747.4L569 748.3L568 748.3L568 745.6L567 745.6L567 747.6L566 747.6L566 749.6L565 749.6L565 747.6L564 747.6L564 749.6L563 749.6L563 748.6L562 748.6L562 747.4L561 747.4L561 747.9L560 747.9L560 742.2L559 742.2L559 742.9L558 742.9L558 745.4L557 745.4L557 747.6L556 747.6L556 746.6L555 746.6L555 744.9L554 744.9L554 745.1L553 745.1L553 742.5L552 742.5L552 747.5L551 747.5L551 747.6L550 747.6L550 747.4L549 747.4L549 741.5L548 741.5L548 746.8L547 746.8L547 748.0L546 748.0L546 741.5L545 741.5L545 743.7L544 743.7L544 746.1L543 746.1L543 748.7L542 748.7L542 747.9L541 747.9L541 749.2L540 749.2L540 747.7L539 747.7L539 747.3L538 747.3L538 749.7L537 749.7L537 745.8L536 745.8L536 744.4L535 744.4L535 749.0L534 749.0L534 747.9L533 747.9L533 747.5L532 747.5L532 746.7L531 746.7L531 747.5L530 747.5L530 742.3L529 742.3L529 747.9L528 747.9L528 746.7L527 746.7L527 744.5L526 744.5L526 744.4L525 744.4L525 738.6L524 738.6L524 745.3L523 745.3L523 745.8L522 745.8L522 741.1L521 741.1L521 742.9L520 742.9L520 745.1L519 745.1L519 746.9L518 746.9L518 742.0L517 742.0L517 748.0L516 748.0L516 740.5L515 740.5L515 748.6L514 748.6L514 742.3L513 742.3L513 747.7L512 747.7L512 746.7L511 746.7L511 746.8L510 746.8L510 746.3L509 746.3L509 748.6L508 748.6L508 741.5L507 741.5L507 744.2L506 744.2L506 746.6L505 746.6L505 740.5L504 740.5L504 740.9L503 740.9L503 748.5L502 748.5L502 745.9L501 745.9L501 742.9L500 742.9L500 747.2L499 747.2L499 741.7L498 741.7Z" fill="#3a74d7"/><rect x="583.9" y="658.5" width="154.3" height="92.5" rx="4" fill="#b9d3f9" stroke="#8fb9f6" stroke-width="1"/><clipPath id="c6"><rect x="583.4" y="658.0" width="155.3" height="93.5" rx="4.5"/></clipPath><path clip-path="url(#c6)" d="M583.4 672.8L584.4 672.8L584.4 672.4L585.4 672.4L585.4 671.6L586.4 671.6L586.4 669.7L587.4 669.7L587.4 676.4L588.4 676.4L588.4 677.1L589.4 677.1L589.4 670.6L590.4 670.6L590.4 670.9L591.4 670.9L591.4 671.7L592.4 671.7L592.4 670.4L593.4 670.4L593.4 677.4L594.4 677.4L594.4 669.1L595.4 669.1L595.4 669.0L596.4 669.0L596.4 673.2L597.4 673.2L597.4 669.1L598.4 669.1L598.4 669.3L599.4 669.3L599.4 668.8L600.4 668.8L600.4 669.0L601.4 669.0L601.4 671.6L602.4 671.6L602.4 668.9L603.4 668.9L603.4 666.4L604.4 666.4L604.4 667.0L605.4 667.0L605.4 667.8L606.4 667.8L606.4 668.6L607.4 668.6L607.4 672.8L608.4 672.8L608.4 667.4L609.4 667.4L609.4 672.4L610.4 672.4L610.4 667.7L611.4 667.7L611.4 670.6L612.4 670.6L612.4 669.5L613.4 669.5L613.4 666.5L614.4 666.5L614.4 664.9L615.4 664.9L615.4 666.8L616.4 666.8L616.4 669.9L617.4 669.9L617.4 670.2L618.4 670.2L618.4 666.3L619.4 666.3L619.4 663.6L620.4 663.6L620.4 664.3L621.4 664.3L621.4 669.4L622.4 669.4L622.4 665.2L623.4 665.2L623.4 670.3L624.4 670.3L624.4 662.5L625.4 662.5L625.4 663.1L626.4 663.1L626.4 664.8L627.4 664.8L627.4 662.3L628.4 662.3L628.4 666.2L629.4 666.2L629.4 667.7L630.4 667.7L630.4 661.5L631.4 661.5L631.4 663.5L632.4 663.5L632.4 665.9L633.4 665.9L633.4 663.1L634.4 663.1L634.4 663.1L635.4 663.1L635.4 665.0L636.4 665.0L636.4 663.7L637.4 663.7L637.4 666.3L638.4 666.3L638.4 660.1L639.4 660.1L639.4 662.1L640.4 662.1L640.4 661.6L641.4 661.6L641.4 661.5L642.4 661.5L642.4 661.4L643.4 661.4L643.4 665.7L644.4 665.7L644.4 663.6L645.4 663.6L645.4 662.2L646.4 662.2L646.4 659.0L647.4 659.0L647.4 668.0L648.4 668.0L648.4 662.0L649.4 662.0L649.4 666.2L650.4 666.2L650.4 663.4L651.4 663.4L651.4 667.5L652.4 667.5L652.4 663.8L653.4 663.8L653.4 664.7L654.4 664.7L654.4 664.2L655.4 664.2L655.4 667.9L656.4 667.9L656.4 667.9L657.4 667.9L657.4 672.4L658.4 672.4L658.4 669.6L659.4 669.6L659.4 665.7L660.4 665.7L660.4 671.0L661.4 671.0L661.4 668.4L662.4 668.4L662.4 666.6L663.4 666.6L663.4 664.7L664.4 664.7L664.4 667.7L665.4 667.7L665.4 669.6L666.4 669.6L666.4 669.2L667.4 669.2L667.4 669.8L668.4 669.8L668.4 666.3L669.4 666.3L669.4 666.2L670.4 666.2L670.4 670.0L671.4 670.0L671.4 665.7L672.4 665.7L672.4 665.1L673.4 665.1L673.4 665.3L674.4 665.3L674.4 664.9L675.4 664.9L675.4 663.7L676.4 663.7L676.4 671.8L677.4 671.8L677.4 666.4L678.4 666.4L678.4 665.9L679.4 665.9L679.4 671.8L680.4 671.8L680.4 670.6L681.4 670.6L681.4 664.4L682.4 664.4L682.4 672.2L683.4 672.2L683.4 666.2L684.4 666.2L684.4 673.7L685.4 673.7L685.4 666.3L686.4 666.3L686.4 671.5L687.4 671.5L687.4 668.8L688.4 668.8L688.4 670.4L689.4 670.4L689.4 666.2L690.4 666.2L690.4 660.0L691.4 660.0L691.4 658.8L692.4 658.8L692.4 664.9L693.4 664.9L693.4 661.4L694.4 661.4L694.4 660.9L695.4 660.9L695.4 668.3L696.4 668.3L696.4 665.7L697.4 665.7L697.4 660.5L698.4 660.5L698.4 660.2L699.4 660.2L699.4 668.8L700.4 668.8L700.4 662.8L701.4 662.8L701.4 669.6L702.4 669.6L702.4 663.9L703.4 663.9L703.4 665.5L704.4 665.5L704.4 665.6L705.4 665.6L705.4 666.8L706.4 666.8L706.4 668.0L707.4 668.0L707.4 666.9L708.4 666.9L708.4 666.6L709.4 666.6L709.4 666.7L710.4 666.7L710.4 669.2L711.4 669.2L711.4 664.8L712.4 664.8L712.4 667.6L713.4 667.6L713.4 664.2L714.4 664.2L714.4 666.2L715.4 666.2L715.4 665.9L716.4 665.9L716.4 668.4L717.4 668.4L717.4 664.6L718.4 664.6L718.4 667.5L719.4 667.5L719.4 665.4L720.4 665.4L720.4 663.2L721.4 663.2L721.4 661.9L722.4 661.9L722.4 663.4L723.4 663.4L723.4 663.2L724.4 663.2L724.4 662.4L725.4 662.4L725.4 662.2L726.4 662.2L726.4 662.6L727.4 662.6L727.4 660.1L728.4 660.1L728.4 662.7L729.4 662.7L729.4 660.3L730.4 660.3L730.4 669.4L731.4 669.4L731.4 663.0L732.4 663.0L732.4 662.8L733.4 662.8L733.4 664.6L734.4 664.6L734.4 671.8L735.4 671.8L735.4 668.6L736.4 668.6L736.4 670.4L737.4 670.4L737.4 669.8L738.4 669.8L738.4 670.8L738.7 670.8L738.7 689.9L738.4 689.9L738.4 690.9L737.4 690.9L737.4 692.3L736.4 692.3L736.4 690.8L735.4 690.8L735.4 695.9L734.4 695.9L734.4 695.5L733.4 695.5L733.4 699.8L732.4 699.8L732.4 694.6L731.4 694.6L731.4 701.3L730.4 701.3L730.4 700.3L729.4 700.3L729.4 701.3L728.4 701.3L728.4 700.0L727.4 700.0L727.4 700.4L726.4 700.4L726.4 695.5L725.4 695.5L725.4 698.7L724.4 698.7L724.4 693.4L723.4 693.4L723.4 697.0L722.4 697.0L722.4 700.9L721.4 700.9L721.4 700.3L720.4 700.3L720.4 701.2L719.4 701.2L719.4 692.4L718.4 692.4L718.4 697.9L717.4 697.9L717.4 696.6L716.4 696.6L716.4 689.1L715.4 689.1L715.4 698.1L714.4 698.1L714.4 693.6L713.4 693.6L713.4 689.4L712.4 689.4L712.4 696.5L711.4 696.5L711.4 691.4L710.4 691.4L710.4 697.1L709.4 697.1L709.4 688.7L708.4 688.7L708.4 698.3L707.4 698.3L707.4 691.2L706.4 691.2L706.4 691.1L705.4 691.1L705.4 691.8L704.4 691.8L704.4 692.6L703.4 692.6L703.4 698.9L702.4 698.9L702.4 694.6L701.4 694.6L701.4 696.5L700.4 696.5L700.4 698.8L699.4 698.8L699.4 702.3L698.4 702.3L698.4 700.1L697.4 700.1L697.4 693.9L696.4 693.9L696.4 699.2L695.4 699.2L695.4 697.6L694.4 697.6L694.4 701.4L693.4 701.4L693.4 701.4L692.4 701.4L692.4 698.5L691.4 698.5L691.4 703.3L690.4 703.3L690.4 700.1L689.4 700.1L689.4 699.0L688.4 699.0L688.4 699.0L687.4 699.0L687.4 697.2L686.4 697.2L686.4 697.7L685.4 697.7L685.4 695.8L684.4 695.8L684.4 695.8L683.4 695.8L683.4 689.2L682.4 689.2L682.4 688.8L681.4 688.8L681.4 693.6L680.4 693.6L680.4 695.6L679.4 695.6L679.4 697.3L678.4 697.3L678.4 696.6L677.4 696.6L677.4 694.6L676.4 694.6L676.4 697.4L675.4 697.4L675.4 697.7L674.4 697.7L674.4 697.8L673.4 697.8L673.4 690.1L672.4 690.1L672.4 689.7L671.4 689.7L671.4 699.2L670.4 699.2L670.4 697.5L669.4 697.5L669.4 697.6L668.4 697.6L668.4 694.2L667.4 694.2L667.4 689.7L666.4 689.7L666.4 689.3L665.4 689.3L665.4 692.4L664.4 692.4L664.4 695.7L663.4 695.7L663.4 693.4L662.4 693.4L662.4 696.0L661.4 696.0L661.4 694.1L660.4 694.1L660.4 693.6L659.4 693.6L659.4 696.8L658.4 696.8L658.4 698.1L657.4 698.1L657.4 690.2L656.4 690.2L656.4 697.7L655.4 697.7L655.4 696.9L654.4 696.9L654.4 694.2L653.4 694.2L653.4 698.9L652.4 698.9L652.4 693.4L651.4 693.4L651.4 700.2L650.4 700.2L650.4 695.5L649.4 695.5L649.4 697.6L648.4 697.6L648.4 702.8L647.4 702.8L647.4 696.7L646.4 696.7L646.4 704.0L645.4 704.0L645.4 699.1L644.4 699.1L644.4 701.9L643.4 701.9L643.4 701.7L642.4 701.7L642.4 697.6L641.4 697.6L641.4 696.1L640.4 696.1L640.4 697.0L639.4 697.0L639.4 693.9L638.4 693.9L638.4 700.4L637.4 700.4L637.4 702.3L636.4 702.3L636.4 700.9L635.4 700.9L635.4 698.6L634.4 698.6L634.4 701.5L633.4 701.5L633.4 699.2L632.4 699.2L632.4 701.1L631.4 701.1L631.4 699.1L630.4 699.1L630.4 698.6L629.4 698.6L629.4 698.4L628.4 698.4L628.4 698.5L627.4 698.5L627.4 692.0L626.4 692.0L626.4 699.3L625.4 699.3L625.4 693.1L624.4 693.1L624.4 698.0L623.4 698.0L623.4 692.7L622.4 692.7L622.4 691.7L621.4 691.7L621.4 697.0L620.4 697.0L620.4 698.5L619.4 698.5L619.4 698.5L618.4 698.5L618.4 696.3L617.4 696.3L617.4 690.7L616.4 690.7L616.4 697.0L615.4 697.0L615.4 690.1L614.4 690.1L614.4 695.4L613.4 695.4L613.4 691.9L612.4 691.9L612.4 692.6L611.4 692.6L611.4 694.9L610.4 694.9L610.4 688.1L609.4 688.1L609.4 693.5L608.4 693.5L608.4 696.1L607.4 696.1L607.4 694.4L606.4 694.4L606.4 688.9L605.4 688.9L605.4 692.1L604.4 692.1L604.4 692.2L603.4 692.2L603.4 692.7L602.4 692.7L602.4 694.0L601.4 694.0L601.4 693.4L600.4 693.4L600.4 694.2L599.4 694.2L599.4 689.2L598.4 689.2L598.4 693.2L597.4 693.2L597.4 685.7L596.4 685.7L596.4 694.8L595.4 694.8L595.4 691.1L594.4 691.1L594.4 687.9L593.4 687.9L593.4 692.4L592.4 692.4L592.4 689.7L591.4 689.7L591.4 692.5L590.4 692.5L590.4 691.8L589.4 691.8L589.4 691.5L588.4 691.5L588.4 690.4L587.4 690.4L587.4 684.4L586.4 684.4L586.4 691.3L585.4 691.3L585.4 691.1L584.4 691.1L584.4 684.3L583.4 684.3ZM583.4 723.9L584.4 723.9L584.4 718.6L585.4 718.6L585.4 716.6L586.4 716.6L586.4 724.5L587.4 724.5L587.4 716.5L588.4 716.5L588.4 719.9L589.4 719.9L589.4 717.5L590.4 717.5L590.4 715.1L591.4 715.1L591.4 718.4L592.4 718.4L592.4 717.1L593.4 717.1L593.4 716.9L594.4 716.9L594.4 723.4L595.4 723.4L595.4 715.8L596.4 715.8L596.4 720.3L597.4 720.3L597.4 714.7L598.4 714.7L598.4 716.5L599.4 716.5L599.4 723.5L600.4 723.5L600.4 716.2L601.4 716.2L601.4 713.5L602.4 713.5L602.4 714.1L603.4 714.1L603.4 720.8L604.4 720.8L604.4 717.7L605.4 717.7L605.4 722.7L606.4 722.7L606.4 714.7L607.4 714.7L607.4 718.5L608.4 718.5L608.4 714.3L609.4 714.3L609.4 713.6L610.4 713.6L610.4 712.9L611.4 712.9L611.4 718.8L612.4 718.8L612.4 714.3L613.4 714.3L613.4 719.5L614.4 719.5L614.4 712.9L615.4 712.9L615.4 713.4L616.4 713.4L616.4 711.6L617.4 711.6L617.4 716.1L618.4 716.1L618.4 719.9L619.4 719.9L619.4 710.4L620.4 710.4L620.4 711.1L621.4 711.1L621.4 718.7L622.4 718.7L622.4 712.2L623.4 712.2L623.4 712.1L624.4 712.1L624.4 710.7L625.4 710.7L625.4 710.2L626.4 710.2L626.4 711.4L627.4 711.4L627.4 710.7L628.4 710.7L628.4 710.4L629.4 710.4L629.4 715.1L630.4 715.1L630.4 708.5L631.4 708.5L631.4 709.7L632.4 709.7L632.4 710.0L633.4 710.0L633.4 714.6L634.4 714.6L634.4 708.3L635.4 708.3L635.4 707.5L636.4 707.5L636.4 709.4L637.4 709.4L637.4 712.7L638.4 712.7L638.4 708.9L639.4 708.9L639.4 708.6L640.4 708.6L640.4 711.3L641.4 711.3L641.4 712.8L642.4 712.8L642.4 713.4L643.4 713.4L643.4 715.2L644.4 715.2L644.4 709.8L645.4 709.8L645.4 710.1L646.4 710.1L646.4 710.6L647.4 710.6L647.4 712.3L648.4 712.3L648.4 707.2L649.4 707.2L649.4 711.2L650.4 711.2L650.4 716.0L651.4 716.0L651.4 709.8L652.4 709.8L652.4 709.1L653.4 709.1L653.4 715.4L654.4 715.4L654.4 712.7L655.4 712.7L655.4 718.1L656.4 718.1L656.4 713.0L657.4 713.0L657.4 712.6L658.4 712.6L658.4 713.0L659.4 713.0L659.4 712.3L660.4 712.3L660.4 712.1L661.4 712.1L661.4 715.2L662.4 715.2L662.4 717.4L663.4 717.4L663.4 716.0L664.4 716.0L664.4 713.4L665.4 713.4L665.4 721.1L666.4 721.1L666.4 715.4L667.4 715.4L667.4 719.8L668.4 719.8L668.4 711.5L669.4 711.5L669.4 712.8L670.4 712.8L670.4 716.8L671.4 716.8L671.4 714.9L672.4 714.9L672.4 711.6L673.4 711.6L673.4 712.7L674.4 712.7L674.4 710.4L675.4 710.4L675.4 712.0L676.4 712.0L676.4 712.2L677.4 712.2L677.4 719.8L678.4 719.8L678.4 711.3L679.4 711.3L679.4 712.7L680.4 712.7L680.4 712.9L681.4 712.9L681.4 713.2L682.4 713.2L682.4 712.5L683.4 712.5L683.4 716.4L684.4 716.4L684.4 720.6L685.4 720.6L685.4 712.1L686.4 712.1L686.4 711.9L687.4 711.9L687.4 710.4L688.4 710.4L688.4 709.5L689.4 709.5L689.4 709.5L690.4 709.5L690.4 708.7L691.4 708.7L691.4 711.0L692.4 711.0L692.4 705.8L693.4 705.8L693.4 707.2L694.4 707.2L694.4 705.9L695.4 705.9L695.4 708.1L696.4 708.1L696.4 715.0L697.4 715.0L697.4 714.0L698.4 714.0L698.4 708.0L699.4 708.0L699.4 711.8L700.4 711.8L700.4 709.7L701.4 709.7L701.4 715.6L702.4 715.6L702.4 713.7L703.4 713.7L703.4 719.7L704.4 719.7L704.4 712.6L705.4 712.6L705.4 713.8L706.4 713.8L706.4 714.9L707.4 714.9L707.4 713.2L708.4 713.2L708.4 712.9L709.4 712.9L709.4 712.6L710.4 712.6L710.4 711.3L711.4 711.3L711.4 712.3L712.4 712.3L712.4 713.1L713.4 713.1L713.4 714.9L714.4 714.9L714.4 719.7L715.4 719.7L715.4 719.2L716.4 719.2L716.4 711.8L717.4 711.8L717.4 710.8L718.4 710.8L718.4 711.8L719.4 711.8L719.4 717.8L720.4 717.8L720.4 709.8L721.4 709.8L721.4 714.3L722.4 714.3L722.4 708.7L723.4 708.7L723.4 707.6L724.4 707.6L724.4 706.7L725.4 706.7L725.4 707.7L726.4 707.7L726.4 713.2L727.4 713.2L727.4 707.1L728.4 707.1L728.4 712.2L729.4 712.2L729.4 711.0L730.4 711.0L730.4 709.6L731.4 709.6L731.4 709.5L732.4 709.5L732.4 713.7L733.4 713.7L733.4 710.8L734.4 710.8L734.4 712.2L735.4 712.2L735.4 721.8L736.4 721.8L736.4 724.2L737.4 724.2L737.4 721.5L738.4 721.5L738.4 719.9L738.7 719.9L738.7 737.0L738.4 737.0L738.4 737.5L737.4 737.5L737.4 739.2L736.4 739.2L736.4 739.0L735.4 739.0L735.4 743.0L734.4 743.0L734.4 741.1L733.4 741.1L733.4 739.6L732.4 739.6L732.4 740.2L731.4 740.2L731.4 748.5L730.4 748.5L730.4 740.1L729.4 740.1L729.4 748.4L728.4 748.4L728.4 740.4L727.4 740.4L727.4 747.2L726.4 747.2L726.4 747.2L725.4 747.2L725.4 741.7L724.4 741.7L724.4 747.6L723.4 747.6L723.4 747.3L722.4 747.3L722.4 748.5L721.4 748.5L721.4 746.4L720.4 746.4L720.4 742.1L719.4 742.1L719.4 745.3L718.4 745.3L718.4 743.6L717.4 743.6L717.4 742.1L716.4 742.1L716.4 741.3L715.4 741.3L715.4 735.8L714.4 735.8L714.4 739.9L713.4 739.9L713.4 742.0L712.4 742.0L712.4 744.3L711.4 744.3L711.4 744.1L710.4 744.1L710.4 736.5L709.4 736.5L709.4 744.1L708.4 744.1L708.4 742.5L707.4 742.5L707.4 742.7L706.4 742.7L706.4 738.4L705.4 738.4L705.4 742.7L704.4 742.7L704.4 742.1L703.4 742.1L703.4 745.1L702.4 745.1L702.4 745.6L701.4 745.6L701.4 739.5L700.4 739.5L700.4 740.7L699.4 740.7L699.4 747.6L698.4 747.6L698.4 748.0L697.4 748.0L697.4 748.0L696.4 748.0L696.4 741.0L695.4 741.0L695.4 750.7L694.4 750.7L694.4 747.6L693.4 747.6L693.4 749.8L692.4 749.8L692.4 748.4L691.4 748.4L691.4 747.4L690.4 747.4L690.4 748.3L689.4 748.3L689.4 747.6L688.4 747.6L688.4 746.1L687.4 746.1L687.4 737.5L686.4 737.5L686.4 744.2L685.4 744.2L685.4 740.3L684.4 740.3L684.4 737.7L683.4 737.7L683.4 740.7L682.4 740.7L682.4 744.2L681.4 744.2L681.4 744.6L680.4 744.6L680.4 743.6L679.4 743.6L679.4 744.6L678.4 744.6L678.4 744.3L677.4 744.3L677.4 745.0L676.4 745.0L676.4 745.6L675.4 745.6L675.4 740.2L674.4 740.2L674.4 746.6L673.4 746.6L673.4 746.4L672.4 746.4L672.4 738.1L671.4 738.1L671.4 743.9L670.4 743.9L670.4 745.1L669.4 745.1L669.4 743.4L668.4 743.4L668.4 741.1L667.4 741.1L667.4 744.9L666.4 744.9L666.4 742.0L665.4 742.0L665.4 744.1L664.4 744.1L664.4 742.8L663.4 742.8L663.4 742.5L662.4 742.5L662.4 740.2L661.4 740.2L661.4 742.8L660.4 742.8L660.4 744.1L659.4 744.1L659.4 743.3L658.4 743.3L658.4 743.1L657.4 743.1L657.4 738.0L656.4 738.0L656.4 743.4L655.4 743.4L655.4 743.8L654.4 743.8L654.4 745.5L653.4 745.5L653.4 745.0L652.4 745.0L652.4 744.6L651.4 744.6L651.4 742.6L650.4 742.6L650.4 744.3L649.4 744.3L649.4 740.6L648.4 740.6L648.4 749.5L647.4 749.5L647.4 749.4L646.4 749.4L646.4 744.3L645.4 744.3L645.4 748.5L644.4 748.5L644.4 741.9L643.4 741.9L643.4 744.0L642.4 744.0L642.4 740.8L641.4 740.8L641.4 740.7L640.4 740.7L640.4 742.7L639.4 742.7L639.4 748.6L638.4 748.6L638.4 747.8L637.4 747.8L637.4 747.4L636.4 747.4L636.4 748.6L635.4 748.6L635.4 747.9L634.4 747.9L634.4 744.6L633.4 744.6L633.4 746.2L632.4 746.2L632.4 745.7L631.4 745.7L631.4 742.4L630.4 742.4L630.4 745.4L629.4 745.4L629.4 743.2L628.4 743.2L628.4 746.0L627.4 746.0L627.4 739.5L626.4 739.5L626.4 747.1L625.4 747.1L625.4 745.7L624.4 745.7L624.4 737.5L623.4 737.5L623.4 745.3L622.4 745.3L622.4 746.4L621.4 746.4L621.4 742.1L620.4 742.1L620.4 743.4L619.4 743.4L619.4 742.3L618.4 742.3L618.4 744.6L617.4 744.6L617.4 745.3L616.4 745.3L616.4 743.7L615.4 743.7L615.4 742.5L614.4 742.5L614.4 739.3L613.4 739.3L613.4 743.5L612.4 743.5L612.4 743.9L611.4 743.9L611.4 737.9L610.4 737.9L610.4 742.7L609.4 742.7L609.4 736.2L608.4 736.2L608.4 743.7L607.4 743.7L607.4 740.0L606.4 740.0L606.4 740.7L605.4 740.7L605.4 740.7L604.4 740.7L604.4 740.7L603.4 740.7L603.4 736.1L602.4 736.1L602.4 742.0L601.4 742.0L601.4 734.5L600.4 734.5L600.4 733.4L599.4 733.4L599.4 738.5L598.4 738.5L598.4 735.8L597.4 735.8L597.4 736.0L596.4 736.0L596.4 739.3L595.4 739.3L595.4 739.4L594.4 739.4L594.4 736.2L593.4 736.2L593.4 737.0L592.4 737.0L592.4 738.8L591.4 738.8L591.4 734.2L590.4 734.2L590.4 738.7L589.4 738.7L589.4 738.4L588.4 738.4L588.4 738.2L587.4 738.2L587.4 738.2L586.4 738.2L586.4 731.1L585.4 731.1L585.4 736.3L584.4 736.3L584.4 737.8L583.4 737.8Z" fill="#3a74d7"/><rect x="740.8" y="658.5" width="98.7" height="92.5" rx="4" fill="#b9d3f9" stroke="#8fb9f6" stroke-width="1"/><clipPath id="c7"><rect x="740.3" y="658.0" width="99.7" height="93.5" rx="4.5"/></clipPath><path clip-path="url(#c7)" d="M740.3 673.3L741.3 673.3L741.3 675.8L742.3 675.8L742.3 673.6L743.3 673.6L743.3 669.3L744.3 669.3L744.3 665.5L745.3 665.5L745.3 663.3L746.3 663.3L746.3 661.7L747.3 661.7L747.3 658.8L748.3 658.8L748.3 659.9L749.3 659.9L749.3 660.1L750.3 660.1L750.3 658.8L751.3 658.8L751.3 658.8L752.3 658.8L752.3 658.8L753.3 658.8L753.3 658.8L754.3 658.8L754.3 663.4L755.3 663.4L755.3 664.4L756.3 664.4L756.3 659.5L757.3 659.5L757.3 661.8L758.3 661.8L758.3 660.7L759.3 660.7L759.3 662.1L760.3 662.1L760.3 663.5L761.3 663.5L761.3 659.9L762.3 659.9L762.3 659.7L763.3 659.7L763.3 659.9L764.3 659.9L764.3 662.3L765.3 662.3L765.3 662.8L766.3 662.8L766.3 659.4L767.3 659.4L767.3 660.8L768.3 660.8L768.3 659.7L769.3 659.7L769.3 662.2L770.3 662.2L770.3 659.7L771.3 659.7L771.3 658.8L772.3 658.8L772.3 659.9L773.3 659.9L773.3 659.8L774.3 659.8L774.3 659.6L775.3 659.6L775.3 661.1L776.3 661.1L776.3 659.5L777.3 659.5L777.3 658.8L778.3 658.8L778.3 659.5L779.3 659.5L779.3 661.6L780.3 661.6L780.3 661.4L781.3 661.4L781.3 659.3L782.3 659.3L782.3 659.4L783.3 659.4L783.3 659.6L784.3 659.6L784.3 662.2L785.3 662.2L785.3 668.0L786.3 668.0L786.3 664.6L787.3 664.6L787.3 662.7L788.3 662.7L788.3 671.3L789.3 671.3L789.3 662.0L790.3 662.0L790.3 670.4L791.3 670.4L791.3 662.8L792.3 662.8L792.3 662.8L793.3 662.8L793.3 662.5L794.3 662.5L794.3 661.7L795.3 661.7L795.3 672.4L796.3 672.4L796.3 659.4L797.3 659.4L797.3 662.5L798.3 662.5L798.3 662.5L799.3 662.5L799.3 659.8L800.3 659.8L800.3 662.2L801.3 662.2L801.3 662.4L802.3 662.4L802.3 662.2L803.3 662.2L803.3 663.4L804.3 663.4L804.3 662.3L805.3 662.3L805.3 661.4L806.3 661.4L806.3 661.9L807.3 661.9L807.3 661.2L808.3 661.2L808.3 660.0L809.3 660.0L809.3 658.8L810.3 658.8L810.3 659.4L811.3 659.4L811.3 659.3L812.3 659.3L812.3 659.4L813.3 659.4L813.3 659.1L814.3 659.1L814.3 660.2L815.3 660.2L815.3 660.9L816.3 660.9L816.3 659.1L817.3 659.1L817.3 659.3L818.3 659.3L818.3 659.0L819.3 659.0L819.3 658.9L820.3 658.9L820.3 660.4L821.3 660.4L821.3 659.1L822.3 659.1L822.3 660.5L823.3 660.5L823.3 663.1L824.3 663.1L824.3 659.6L825.3 659.6L825.3 660.3L826.3 660.3L826.3 661.9L827.3 661.9L827.3 659.4L828.3 659.4L828.3 658.8L829.3 658.8L829.3 662.5L830.3 662.5L830.3 659.7L831.3 659.7L831.3 659.3L832.3 659.3L832.3 661.6L833.3 661.6L833.3 659.8L834.3 659.8L834.3 659.9L835.3 659.9L835.3 661.5L836.3 661.5L836.3 662.0L837.3 662.0L837.3 667.0L838.3 667.0L838.3 666.0L839.3 666.0L839.3 669.1L840 669.1L840 695.9L839.3 695.9L839.3 697.2L838.3 697.2L838.3 698.6L837.3 698.6L837.3 701.1L836.3 701.1L836.3 701.3L835.3 701.3L835.3 702.1L834.3 702.1L834.3 701.9L833.3 701.9L833.3 703.3L832.3 703.3L832.3 703.4L831.3 703.4L831.3 703.2L830.3 703.2L830.3 703.2L829.3 703.2L829.3 701.0L828.3 701.0L828.3 704.0L827.3 704.0L827.3 703.5L826.3 703.5L826.3 703.1L825.3 703.1L825.3 703.5L824.3 703.5L824.3 702.6L823.3 702.6L823.3 703.3L822.3 703.3L822.3 703.2L821.3 703.2L821.3 703.2L820.3 703.2L820.3 700.5L819.3 700.5L819.3 704.0L818.3 704.0L818.3 702.2L817.3 702.2L817.3 704.0L816.3 704.0L816.3 703.7L815.3 703.7L815.3 704.0L814.3 704.0L814.3 700.6L813.3 700.6L813.3 703.8L812.3 703.8L812.3 703.5L811.3 703.5L811.3 702.5L810.3 702.5L810.3 703.0L809.3 703.0L809.3 703.1L808.3 703.1L808.3 700.7L807.3 700.7L807.3 695.8L806.3 695.8L806.3 695.6L805.3 695.6L805.3 698.4L804.3 698.4L804.3 695.2L803.3 695.2L803.3 702.8L802.3 702.8L802.3 692.6L801.3 692.6L801.3 700.2L800.3 700.2L800.3 696.5L799.3 696.5L799.3 703.7L798.3 703.7L798.3 701.0L797.3 701.0L797.3 702.0L796.3 702.0L796.3 693.3L795.3 693.3L795.3 695.0L794.3 695.0L794.3 700.3L793.3 700.3L793.3 690.6L792.3 690.6L792.3 698.7L791.3 698.7L791.3 693.0L790.3 693.0L790.3 699.9L789.3 699.9L789.3 694.5L788.3 694.5L788.3 702.1L787.3 702.1L787.3 691.1L786.3 691.1L786.3 694.4L785.3 694.4L785.3 703.7L784.3 703.7L784.3 701.6L783.3 701.6L783.3 702.3L782.3 702.3L782.3 702.5L781.3 702.5L781.3 703.2L780.3 703.2L780.3 700.3L779.3 700.3L779.3 699.3L778.3 699.3L778.3 703.3L777.3 703.3L777.3 703.2L776.3 703.2L776.3 703.2L775.3 703.2L775.3 699.4L774.3 699.4L774.3 702.0L773.3 702.0L773.3 703.0L772.3 703.0L772.3 703.0L771.3 703.0L771.3 704.0L770.3 704.0L770.3 700.6L769.3 700.6L769.3 704.0L768.3 704.0L768.3 702.1L767.3 702.1L767.3 702.3L766.3 702.3L766.3 702.8L765.3 702.8L765.3 701.4L764.3 701.4L764.3 698.9L763.3 698.9L763.3 700.7L762.3 700.7L762.3 704.0L761.3 704.0L761.3 702.9L760.3 702.9L760.3 703.9L759.3 703.9L759.3 702.9L758.3 702.9L758.3 703.7L757.3 703.7L757.3 703.6L756.3 703.6L756.3 702.8L755.3 702.8L755.3 703.7L754.3 703.7L754.3 702.7L753.3 702.7L753.3 703.8L752.3 703.8L752.3 704.0L751.3 704.0L751.3 702.7L750.3 702.7L750.3 704.0L749.3 704.0L749.3 699.6L748.3 699.6L748.3 702.4L747.3 702.4L747.3 701.3L746.3 701.3L746.3 699.1L745.3 699.1L745.3 695.1L744.3 695.1L744.3 695.2L743.3 695.2L743.3 693.6L742.3 693.6L742.3 685.3L741.3 685.3L741.3 689.4L740.3 689.4ZM740.3 721.9L741.3 721.9L741.3 716.4L742.3 716.4L742.3 719.0L743.3 719.0L743.3 718.8L744.3 718.8L744.3 712.2L745.3 712.2L745.3 714.1L746.3 714.1L746.3 708.1L747.3 708.1L747.3 707.0L748.3 707.0L748.3 706.6L749.3 706.6L749.3 705.6L750.3 705.6L750.3 705.9L751.3 705.9L751.3 705.5L752.3 705.5L752.3 711.0L753.3 711.0L753.3 707.8L754.3 707.8L754.3 706.5L755.3 706.5L755.3 705.6L756.3 705.6L756.3 711.5L757.3 711.5L757.3 707.9L758.3 707.9L758.3 706.0L759.3 706.0L759.3 711.1L760.3 711.1L760.3 711.5L761.3 711.5L761.3 708.1L762.3 708.1L762.3 706.6L763.3 706.6L763.3 708.0L764.3 708.0L764.3 707.4L765.3 707.4L765.3 706.7L766.3 706.7L766.3 706.5L767.3 706.5L767.3 708.1L768.3 708.1L768.3 706.5L769.3 706.5L769.3 708.3L770.3 708.3L770.3 706.2L771.3 706.2L771.3 705.5L772.3 705.5L772.3 706.4L773.3 706.4L773.3 708.3L774.3 708.3L774.3 706.6L775.3 706.6L775.3 706.4L776.3 706.4L776.3 705.5L777.3 705.5L777.3 705.5L778.3 705.5L778.3 705.5L779.3 705.5L779.3 706.4L780.3 706.4L780.3 708.7L781.3 708.7L781.3 706.2L782.3 706.2L782.3 706.4L783.3 706.4L783.3 708.9L784.3 708.9L784.3 706.4L785.3 706.4L785.3 709.0L786.3 709.0L786.3 709.5L787.3 709.5L787.3 707.4L788.3 707.4L788.3 709.8L789.3 709.8L789.3 714.9L790.3 714.9L790.3 708.6L791.3 708.6L791.3 707.8L792.3 707.8L792.3 717.0L793.3 717.0L793.3 713.7L794.3 713.7L794.3 708.4L795.3 708.4L795.3 707.3L796.3 707.3L796.3 709.4L797.3 709.4L797.3 711.0L798.3 711.0L798.3 711.9L799.3 711.9L799.3 707.2L800.3 707.2L800.3 713.9L801.3 713.9L801.3 708.9L802.3 708.9L802.3 708.9L803.3 708.9L803.3 708.8L804.3 708.8L804.3 708.9L805.3 708.9L805.3 715.4L806.3 715.4L806.3 708.8L807.3 708.8L807.3 718.8L808.3 718.8L808.3 705.7L809.3 705.7L809.3 709.5L810.3 709.5L810.3 705.5L811.3 705.5L811.3 705.5L812.3 705.5L812.3 708.6L813.3 708.6L813.3 707.2L814.3 707.2L814.3 706.2L815.3 706.2L815.3 706.1L816.3 706.1L816.3 705.5L817.3 705.5L817.3 706.0L818.3 706.0L818.3 706.3L819.3 706.3L819.3 705.5L820.3 705.5L820.3 706.2L821.3 706.2L821.3 706.3L822.3 706.3L822.3 706.4L823.3 706.4L823.3 705.9L824.3 705.9L824.3 705.5L825.3 705.5L825.3 706.8L826.3 706.8L826.3 707.3L827.3 707.3L827.3 707.1L828.3 707.1L828.3 706.4L829.3 706.4L829.3 706.4L830.3 706.4L830.3 706.1L831.3 706.1L831.3 706.2L832.3 706.2L832.3 705.8L833.3 705.8L833.3 706.2L834.3 706.2L834.3 707.0L835.3 707.0L835.3 708.5L836.3 708.5L836.3 712.5L837.3 712.5L837.3 711.0L838.3 711.0L838.3 715.8L839.3 715.8L839.3 713.3L840 713.3L840 740.9L839.3 740.9L839.3 743.3L838.3 743.3L838.3 746.2L837.3 746.2L837.3 746.7L836.3 746.7L836.3 746.7L835.3 746.7L835.3 749.0L834.3 749.0L834.3 746.5L833.3 746.5L833.3 750.2L832.3 750.2L832.3 746.8L831.3 746.8L831.3 750.6L830.3 750.6L830.3 746.5L829.3 746.5L829.3 750.1L828.3 750.1L828.3 750.0L827.3 750.0L827.3 749.9L826.3 749.9L826.3 750.4L825.3 750.4L825.3 750.7L824.3 750.7L824.3 750.7L823.3 750.7L823.3 749.7L822.3 749.7L822.3 750.0L821.3 750.0L821.3 750.7L820.3 750.7L820.3 750.2L819.3 750.2L819.3 750.1L818.3 750.1L818.3 750.0L817.3 750.0L817.3 748.1L816.3 748.1L816.3 750.3L815.3 750.3L815.3 750.1L814.3 750.1L814.3 747.8L813.3 747.8L813.3 750.0L812.3 750.0L812.3 750.1L811.3 750.1L811.3 750.7L810.3 750.7L810.3 750.7L809.3 750.7L809.3 747.5L808.3 747.5L808.3 747.8L807.3 747.8L807.3 747.4L806.3 747.4L806.3 749.3L805.3 749.3L805.3 747.5L804.3 747.5L804.3 747.3L803.3 747.3L803.3 749.1L802.3 749.1L802.3 749.3L801.3 749.3L801.3 742.3L800.3 742.3L800.3 747.1L799.3 747.1L799.3 747.0L798.3 747.0L798.3 745.2L797.3 745.2L797.3 739.5L796.3 739.5L796.3 746.8L795.3 746.8L795.3 738.7L794.3 738.7L794.3 745.3L793.3 745.3L793.3 746.9L792.3 746.9L792.3 746.9L791.3 746.9L791.3 743.9L790.3 743.9L790.3 746.7L789.3 746.7L789.3 746.7L788.3 746.7L788.3 737.0L787.3 737.0L787.3 746.4L786.3 746.4L786.3 747.1L785.3 747.1L785.3 749.6L784.3 749.6L784.3 750.0L783.3 750.0L783.3 748.9L782.3 748.9L782.3 749.8L781.3 749.8L781.3 749.9L780.3 749.9L780.3 750.7L779.3 750.7L779.3 750.7L778.3 750.7L778.3 749.8L777.3 749.8L777.3 749.9L776.3 749.9L776.3 750.7L775.3 750.7L775.3 745.7L774.3 745.7L774.3 745.8L773.3 745.8L773.3 745.6L772.3 745.6L772.3 749.7L771.3 749.7L771.3 750.2L770.3 750.2L770.3 750.5L769.3 750.5L769.3 749.8L768.3 749.8L768.3 748.5L767.3 748.5L767.3 745.8L766.3 745.8L766.3 750.3L765.3 750.3L765.3 749.2L764.3 749.2L764.3 750.6L763.3 750.6L763.3 749.9L762.3 749.9L762.3 750.6L761.3 750.6L761.3 745.8L760.3 745.8L760.3 750.6L759.3 750.6L759.3 748.9L758.3 748.9L758.3 748.2L757.3 748.2L757.3 750.6L756.3 750.6L756.3 749.5L755.3 749.5L755.3 746.8L754.3 746.8L754.3 744.7L753.3 744.7L753.3 749.6L752.3 749.6L752.3 745.8L751.3 745.8L751.3 746.5L750.3 746.5L750.3 749.4L749.3 749.4L749.3 749.3L748.3 749.3L748.3 750.7L747.3 750.7L747.3 747.5L746.3 747.5L746.3 745.5L745.3 745.5L745.3 743.7L744.3 743.7L744.3 740.8L743.3 740.8L743.3 742.2L742.3 742.2L742.3 733.8L741.3 733.8L741.3 731.1L740.3 731.1Z" fill="#3a74d7"/><rect x="842.5" y="658.5" width="122.5" height="92.5" rx="4" fill="#b9d3f9" stroke="#8fb9f6" stroke-width="1"/><clipPath id="c8"><rect x="842.0" y="658.0" width="123.5" height="93.5" rx="4.5"/></clipPath><path clip-path="url(#c8)" d="M842 660.9L843 660.9L843 660.6L844 660.6L844 661.5L845 661.5L845 662.8L846 662.8L846 659.3L847 659.3L847 660.2L848 660.2L848 660.6L849 660.6L849 659.5L850 659.5L850 659.7L851 659.7L851 659.2L852 659.2L852 662.2L853 662.2L853 658.8L854 658.8L854 659.5L855 659.5L855 659.5L856 659.5L856 659.0L857 659.0L857 659.3L858 659.3L858 659.6L859 659.6L859 658.8L860 658.8L860 659.3L861 659.3L861 660.9L862 660.9L862 659.6L863 659.6L863 659.4L864 659.4L864 659.7L865 659.7L865 659.4L866 659.4L866 659.5L867 659.5L867 659.6L868 659.6L868 661.7L869 661.7L869 661.2L870 661.2L870 664.1L871 664.1L871 666.2L872 666.2L872 666.0L873 666.0L873 667.3L874 667.3L874 663.8L875 663.8L875 668.5L876 668.5L876 672.6L877 672.6L877 666.1L878 666.1L878 664.1L879 664.1L879 665.6L880 665.6L880 663.3L881 663.3L881 665.9L882 665.9L882 662.3L883 662.3L883 661.2L884 661.2L884 659.3L885 659.3L885 659.7L886 659.7L886 659.7L887 659.7L887 660.9L888 660.9L888 659.4L889 659.4L889 659.5L890 659.5L890 662.3L891 662.3L891 659.2L892 659.2L892 661.4L893 661.4L893 663.0L894 663.0L894 659.6L895 659.6L895 658.9L896 658.9L896 660.9L897 660.9L897 659.3L898 659.3L898 658.8L899 658.8L899 663.2L900 663.2L900 659.8L901 659.8L901 659.4L902 659.4L902 661.7L903 661.7L903 659.4L904 659.4L904 660.6L905 660.6L905 659.2L906 659.2L906 665.1L907 665.1L907 671.9L908 671.9L908 670.6L909 670.6L909 672.4L910 672.4L910 673.0L911 673.0L911 672.8L912 672.8L912 672.0L913 672.0L913 671.4L914 671.4L914 666.0L915 666.0L915 662.1L916 662.1L916 664.4L917 664.4L917 672.4L918 672.4L918 672.0L919 672.0L919 673.5L920 673.5L920 669.9L921 669.9L921 668.5L922 668.5L922 663.7L923 663.7L923 661.5L924 661.5L924 662.8L925 662.8L925 659.5L926 659.5L926 662.6L927 662.6L927 661.1L928 661.1L928 659.2L929 659.2L929 659.6L930 659.6L930 661.6L931 661.6L931 659.4L932 659.4L932 658.8L933 658.8L933 659.4L934 659.4L934 659.9L935 659.9L935 659.5L936 659.5L936 660.1L937 660.1L937 658.8L938 658.8L938 662.8L939 662.8L939 659.5L940 659.5L940 661.4L941 661.4L941 661.8L942 661.8L942 663.2L943 663.2L943 662.6L944 662.6L944 660.4L945 660.4L945 659.4L946 659.4L946 662.3L947 662.3L947 662.3L948 662.3L948 659.2L949 659.2L949 658.8L950 658.8L950 658.8L951 658.8L951 666.8L952 666.8L952 672.5L953 672.5L953 671.7L954 671.7L954 671.7L955 671.7L955 673.6L956 673.6L956 671.8L957 671.8L957 672.2L958 672.2L958 673.5L959 673.5L959 673.6L960 673.6L960 675.6L961 675.6L961 677.1L962 677.1L962 677.6L963 677.6L963 680.4L964 680.4L964 680.5L965 680.5L965 681.4L965.5 681.4L965.5 681.4L965 681.4L965 683.1L964 683.1L964 682.9L963 682.9L963 682.3L962 682.3L962 686.7L961 686.7L961 686.4L960 686.4L960 689.4L959 689.4L959 689.6L958 689.6L958 690.3L957 690.3L957 691.3L956 691.3L956 687.2L955 687.2L955 692.2L954 692.2L954 692.5L953 692.5L953 691.6L952 691.6L952 698.3L951 698.3L951 703.1L950 703.1L950 701.9L949 701.9L949 704.0L948 704.0L948 703.1L947 703.1L947 703.1L946 703.1L946 700.5L945 700.5L945 702.0L944 702.0L944 700.2L943 700.2L943 701.6L942 701.6L942 701.9L941 701.9L941 703.1L940 703.1L940 703.4L939 703.4L939 704.0L938 704.0L938 703.5L937 703.5L937 702.1L936 702.1L936 700.3L935 700.3L935 703.4L934 703.4L934 703.3L933 703.3L933 701.0L932 701.0L932 703.6L931 703.6L931 700.5L930 700.5L930 703.1L929 703.1L929 703.4L928 703.4L928 703.8L927 703.8L927 699.6L926 699.6L926 704.0L925 704.0L925 704.0L924 704.0L924 703.2L923 703.2L923 699.0L922 699.0L922 691.9L921 691.9L921 692.1L920 692.1L920 692.3L919 692.3L919 692.4L918 692.4L918 691.4L917 691.4L917 698.4L916 698.4L916 700.8L915 700.8L915 697.3L914 697.3L914 693.2L913 693.2L913 691.7L912 691.7L912 688.9L911 688.9L911 689.8L910 689.8L910 690.4L909 690.4L909 687.9L908 687.9L908 692.1L907 692.1L907 698.1L906 698.1L906 703.3L905 703.3L905 702.8L904 702.8L904 703.0L903 703.0L903 702.2L902 702.2L902 703.2L901 703.2L901 699.6L900 699.6L900 701.6L899 701.6L899 703.1L898 703.1L898 701.6L897 701.6L897 703.3L896 703.3L896 699.8L895 699.8L895 703.3L894 703.3L894 704.0L893 704.0L893 702.6L892 702.6L892 704.0L891 704.0L891 701.5L890 701.5L890 703.1L889 703.1L889 704.0L888 704.0L888 704.0L887 704.0L887 701.1L886 701.1L886 703.0L885 703.0L885 704.0L884 704.0L884 701.5L883 701.5L883 699.8L882 699.8L882 698.7L881 698.7L881 696.6L880 696.6L880 696.9L879 696.9L879 696.9L878 696.9L878 694.7L877 694.7L877 696.6L876 696.6L876 696.9L875 696.9L875 690.7L874 690.7L874 689.9L873 689.9L873 696.6L872 696.6L872 697.5L871 697.5L871 700.7L870 700.7L870 703.0L869 703.0L869 703.4L868 703.4L868 702.3L867 702.3L867 704.0L866 704.0L866 700.4L865 700.4L865 702.6L864 702.6L864 703.1L863 703.1L863 700.0L862 700.0L862 703.1L861 703.1L861 703.1L860 703.1L860 704.0L859 704.0L859 702.7L858 702.7L858 702.4L857 702.4L857 702.3L856 702.3L856 703.2L855 703.2L855 704.0L854 704.0L854 703.1L853 703.1L853 704.0L852 704.0L852 703.2L851 703.2L851 704.0L850 704.0L850 704.0L849 704.0L849 702.3L848 702.3L848 703.5L847 703.5L847 704.0L846 704.0L846 702.1L845 702.1L845 701.2L844 701.2L844 700.7L843 700.7L843 700.8L842 700.8ZM842 709.4L843 709.4L843 706.4L844 706.4L844 707.3L845 707.3L845 705.5L846 705.5L846 705.5L847 705.5L847 708.0L848 708.0L848 706.1L849 706.1L849 705.6L850 705.6L850 706.2L851 706.2L851 708.3L852 708.3L852 708.4L853 708.4L853 706.4L854 706.4L854 708.7L855 708.7L855 706.0L856 706.0L856 705.7L857 705.7L857 707.5L858 707.5L858 709.8L859 709.8L859 705.5L860 705.5L860 705.5L861 705.5L861 706.9L862 706.9L862 709.8L863 709.8L863 705.5L864 705.5L864 706.2L865 706.2L865 707.6L866 707.6L866 705.5L867 705.5L867 706.2L868 706.2L868 705.9L869 705.9L869 706.0L870 706.0L870 712.4L871 712.4L871 712.6L872 712.6L872 719.7L873 719.7L873 715.8L874 715.8L874 712.9L875 712.9L875 712.6L876 712.6L876 710.7L877 710.7L877 712.6L878 712.6L878 714.7L879 714.7L879 712.6L880 712.6L880 716.3L881 716.3L881 716.9L882 716.9L882 713.5L883 713.5L883 708.1L884 708.1L884 705.5L885 705.5L885 706.2L886 706.2L886 709.9L887 709.9L887 707.7L888 707.7L888 706.2L889 706.2L889 708.8L890 708.8L890 707.5L891 707.5L891 705.5L892 705.5L892 706.8L893 706.8L893 706.1L894 706.1L894 706.7L895 706.7L895 709.7L896 709.7L896 705.6L897 705.6L897 705.5L898 705.5L898 705.6L899 705.6L899 708.0L900 708.0L900 706.5L901 706.5L901 706.4L902 706.4L902 706.2L903 706.2L903 705.5L904 705.5L904 706.4L905 706.4L905 707.5L906 707.5L906 712.8L907 712.8L907 719.9L908 719.9L908 718.1L909 718.1L909 722.0L910 722.0L910 720.1L911 720.1L911 718.8L912 718.8L912 717.7L913 717.7L913 717.3L914 717.3L914 712.6L915 712.6L915 708.8L916 708.8L916 714.3L917 714.3L917 716.3L918 716.3L918 717.5L919 717.5L919 718.1L920 718.1L920 720.6L921 720.6L921 715.8L922 715.8L922 713.2L923 713.2L923 705.8L924 705.8L924 706.7L925 706.7L925 707.0L926 707.0L926 706.6L927 706.6L927 705.9L928 705.9L928 706.1L929 706.1L929 706.1L930 706.1L930 706.2L931 706.2L931 705.5L932 705.5L932 706.3L933 706.3L933 709.6L934 709.6L934 705.5L935 705.5L935 707.3L936 707.3L936 706.1L937 706.1L937 706.3L938 706.3L938 705.7L939 705.7L939 706.4L940 706.4L940 708.3L941 708.3L941 706.2L942 706.2L942 706.0L943 706.0L943 709.4L944 709.4L944 705.8L945 705.8L945 706.3L946 706.3L946 706.4L947 706.4L947 706.3L948 706.3L948 709.7L949 709.7L949 705.8L950 705.8L950 706.5L951 706.5L951 711.8L952 711.8L952 718.1L953 718.1L953 717.4L954 717.4L954 719.1L955 719.1L955 722.3L956 722.3L956 718.4L957 718.4L957 719.9L958 719.9L958 721.8L959 721.8L959 722.2L960 722.2L960 720.4L961 720.4L961 722.0L962 722.0L962 724.5L963 724.5L963 725.0L964 725.0L964 728.1L965 728.1L965 728.1L965.5 728.1L965.5 728.7L965 728.7L965 728.2L964 728.2L964 729.2L963 729.2L963 733.2L962 733.2L962 734.5L961 734.5L961 734.2L960 734.2L960 735.0L959 735.0L959 733.8L958 733.8L958 736.3L957 736.3L957 736.8L956 736.8L956 737.0L955 737.0L955 735.7L954 735.7L954 738.8L953 738.8L953 736.6L952 736.6L952 743.7L951 743.7L951 750.7L950 750.7L950 747.7L949 747.7L949 750.1L948 750.1L948 749.9L947 749.9L947 747.1L946 747.1L946 750.7L945 750.7L945 748.4L944 748.4L944 749.2L943 749.2L943 750.7L942 750.7L942 746.7L941 746.7L941 746.9L940 746.9L940 750.0L939 750.0L939 747.9L938 747.9L938 750.7L937 750.7L937 749.9L936 749.9L936 749.6L935 749.6L935 747.6L934 747.6L934 748.5L933 748.5L933 748.5L932 748.5L932 750.0L931 750.0L931 750.6L930 750.6L930 749.9L929 749.9L929 749.3L928 749.3L928 750.7L927 750.7L927 750.2L926 750.2L926 750.3L925 750.3L925 750.6L924 750.6L924 749.3L923 749.3L923 745.1L922 745.1L922 740.9L921 740.9L921 738.7L920 738.7L920 738.4L919 738.4L919 738.8L918 738.8L918 740.8L917 740.8L917 743.9L916 743.9L916 745.3L915 745.3L915 743.7L914 743.7L914 740.0L913 740.0L913 737.4L912 737.4L912 737.1L911 737.1L911 737.4L910 737.4L910 737.1L909 737.1L909 737.8L908 737.8L908 739.4L907 739.4L907 745.7L906 745.7L906 746.5L905 746.5L905 748.8L904 748.8L904 749.2L903 749.2L903 750.2L902 750.2L902 749.3L901 749.3L901 750.1L900 750.1L900 750.7L899 750.7L899 749.0L898 749.0L898 746.4L897 746.4L897 749.5L896 749.5L896 748.9L895 748.9L895 747.4L894 747.4L894 750.7L893 750.7L893 750.4L892 750.4L892 750.1L891 750.1L891 750.7L890 750.7L890 749.9L889 749.9L889 750.7L888 750.7L888 750.4L887 750.4L887 750.7L886 750.7L886 750.7L885 750.7L885 750.7L884 750.7L884 750.0L883 750.0L883 744.0L882 744.0L882 744.2L881 744.2L881 743.4L880 743.4L880 742.6L879 742.6L879 743.3L878 743.3L878 735.0L877 735.0L877 735.9L876 735.9L876 745.3L875 745.3L875 742.6L874 742.6L874 743.6L873 743.6L873 744.7L872 744.7L872 741.5L871 741.5L871 745.1L870 745.1L870 748.9L869 748.9L869 748.9L868 748.9L868 749.0L867 749.0L867 747.6L866 747.6L866 750.7L865 750.7L865 749.8L864 749.8L864 750.1L863 750.1L863 749.2L862 749.2L862 750.4L861 750.4L861 750.0L860 750.0L860 750.2L859 750.2L859 750.7L858 750.7L858 749.9L857 749.9L857 746.7L856 746.7L856 749.7L855 749.7L855 750.7L854 750.7L854 750.2L853 750.2L853 747.6L852 747.6L852 750.0L851 750.0L851 747.0L850 747.0L850 748.0L849 748.0L849 749.8L848 749.8L848 748.1L847 748.1L847 750.1L846 750.1L846 750.1L845 750.1L845 750.7L844 750.7L844 746.4L843 746.4L843 748.4L842 748.4Z" fill="#3a74d7"/><rect x="195.7" y="619" width="1.5" height="138" fill="#d01010"/><path d="M0 746h19a5 5 0 0 1 5 5v2a5 5 0 0 1 -5 5h-14a5 5 0 0 1 -5 -5z" fill="#2b2f3b"/><text x="12" y="756" text-anchor="middle" font-family="Liberation Sans" font-weight="bold" font-size="11" fill="#fff">1</text><path d="M86 746h19a5 5 0 0 1 5 5v2a5 5 0 0 1 -5 5h-14a5 5 0 0 1 -5 -5z" fill="#2b2f3b"/><text x="98" y="756" text-anchor="middle" font-family="Liberation Sans" font-weight="bold" font-size="11" fill="#fff">2</text><path d="M193 746h19a5 5 0 0 1 5 5v2a5 5 0 0 1 -5 5h-14a5 5 0 0 1 -5 -5z" fill="#2b2f3b"/><text x="205" y="756" text-anchor="middle" font-family="Liberation Sans" font-weight="bold" font-size="11" fill="#fff">3</text><path d="M262 746h19a5 5 0 0 1 5 5v2a5 5 0 0 1 -5 5h-14a5 5 0 0 1 -5 -5z" fill="#2b2f3b"/><text x="274" y="756" text-anchor="middle" font-family="Liberation Sans" font-weight="bold" font-size="11" fill="#fff">4</text><path d="M371 746h19a5 5 0 0 1 5 5v2a5 5 0 0 1 -5 5h-14a5 5 0 0 1 -5 -5z" fill="#2b2f3b"/><text x="383" y="756" text-anchor="middle" font-family="Liberation Sans" font-weight="bold" font-size="11" fill="#fff">5</text><path d="M497.5 746h19a5 5 0 0 1 5 5v2a5 5 0 0 1 -5 5h-14a5 5 0 0 1 -5 -5z" fill="#2b2f3b"/><text x="509.5" y="756" text-anchor="middle" font-family="Liberation Sans" font-weight="bold" font-size="11" fill="#fff">6</text><path d="M583 746h19a5 5 0 0 1 5 5v2a5 5 0 0 1 -5 5h-14a5 5 0 0 1 -5 -5z" fill="#2b2f3b"/><text x="595" y="756" text-anchor="middle" font-family="Liberation Sans" font-weight="bold" font-size="11" fill="#fff">7</text><path d="M740 746h19a5 5 0 0 1 5 5v2a5 5 0 0 1 -5 5h-14a5 5 0 0 1 -5 -5z" fill="#2b2f3b"/><text x="752" y="756" text-anchor="middle" font-family="Liberation Sans" font-weight="bold" font-size="11" fill="#fff">8</text><path d="M842 746h19a5 5 0 0 1 5 5v2a5 5 0 0 1 -5 5h-14a5 5 0 0 1 -5 -5z" fill="#2b2f3b"/><text x="854" y="756" text-anchor="middle" font-family="Liberation Sans" font-weight="bold" font-size="11" fill="#fff">9</text></svg>
 <span class="a" style="left:15px;top:774px;font-size:13px;color:#5a5a5a">TRIAL version</span>
</div>
</body></html>
